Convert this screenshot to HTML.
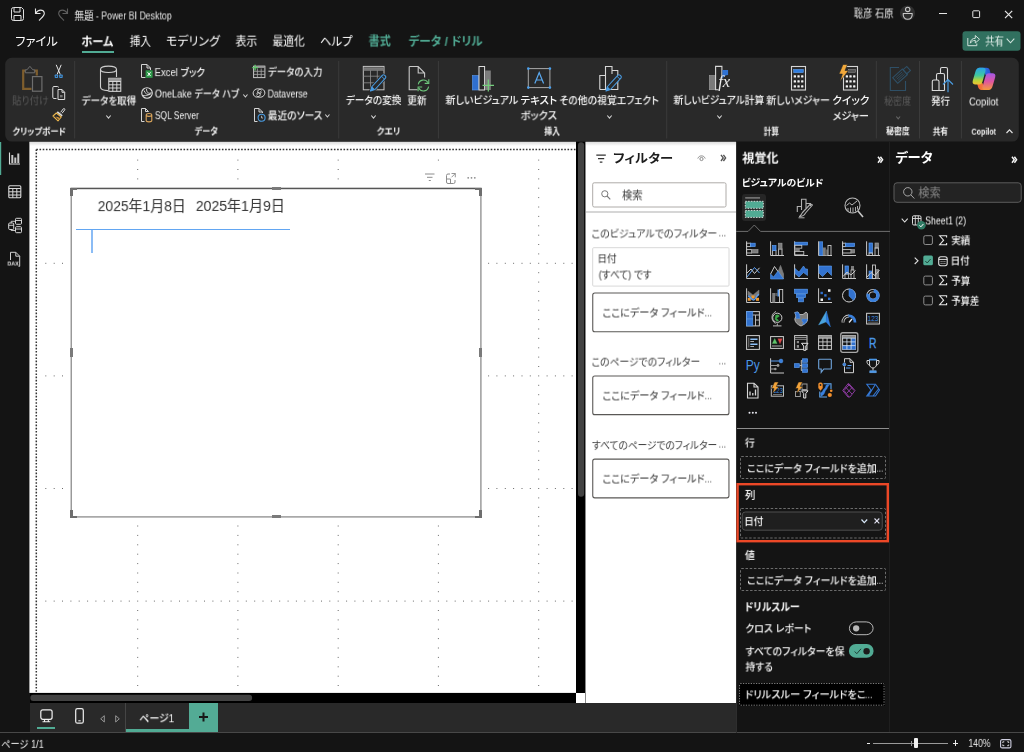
<!DOCTYPE html>
<html lang="ja"><head><meta charset="utf-8"><title>無題 - Power BI Desktop</title>
<style>
html,body{margin:0;padding:0}
html{background:#141414}
body{width:1024px;height:752px;overflow:hidden;position:relative;background:#141414;font-family:'Liberation Sans','Noto Sans CJK JP',sans-serif;color:#fff}
body div,body svg,body span.t{position:absolute;box-sizing:border-box}
span.t{white-space:pre;transform-origin:0 0;display:block;will-change:transform}
svg{overflow:visible}
</style></head>
<body>
<svg style="left:4px;top:56px" width="1016" height="87"><rect x="1.20" y="1.80" width="1013.60" height="83.80" rx="6.5" fill="#292929"/></svg>
<div style="left:0px;top:142px;width:29px;height:561px;background:#141414;"></div>
<svg style="left:0px;top:142px;" width="2" height="33" viewBox="0 0 2 33"><rect x="0" y="0" width="1.200" height="33" fill="#51ab94"/></svg>
<svg style="left:28px;top:140px" width="549" height="554"><rect x="1.40" y="1.80" width="546.60" height="551.10" rx="0" fill="#ffffff"/></svg>
<div style="left:576px;top:142px;width:9px;height:551px;background:#000;"></div>
<svg style="left:576px;top:142px;" width="9" height="356" viewBox="0 0 9 356"><rect x="2" y="0.300" width="6.200" height="354.500" rx="3" fill="#424242"/></svg>
<div style="left:30px;top:693px;width:546px;height:10px;background:#000;"></div>
<svg style="left:30px;top:693px;" width="224" height="10" viewBox="0 0 224 10"><rect x="0.300" y="1.700" width="221.800" height="6.400" rx="3" fill="#424242"/></svg>
<div style="left:576px;top:693px;width:9px;height:10px;background:#fff;"></div>
<svg style="left:584px;top:140px" width="153" height="564"><rect x="1.50" y="1.80" width="150.50" height="561.20" rx="0" fill="#ffffff"/></svg>
<div style="left:736px;top:142px;width:154px;height:591px;background:#141414;"></div>
<svg style="left:888px;top:141px" width="4" height="592"><rect x="1.80" y="1.00" width="1.20" height="590.00" rx="0" fill="#4a4a4a"/></svg>
<div style="left:890px;top:142px;width:134px;height:591px;background:#141414;"></div>
<div style="left:30px;top:703px;width:706px;height:30px;background:#292929;"></div>
<div style="left:0px;top:732px;width:1024px;height:1px;background:#484848;"></div>
<div style="left:0px;top:733px;width:1024px;height:19px;background:#141414;"></div>
<svg style="left:11px;top:7px;" width="13" height="14" viewBox="0 0 13 14"><path d="M0.5 2.5 Q0.5 0.5 2.5 0.5 H10.5 L12.5 2.5 V11.5 Q12.5 13.5 10.5 13.5 H2.5 Q0.5 13.5 0.5 11.5 Z M3 0.5 V5 H9 V0.5 M3 13.5 V8.5 H10 V13.5" fill="none" stroke="#e0e0e0" stroke-width="1"/></svg>
<svg style="left:34px;top:7px;" width="12" height="14" viewBox="0 0 12 14"><path d="M1.5 1.5 V6.5 H6.5 M1.8 6.3 C4 2 9.5 2.2 10.3 6 C10.8 8.5 8 10.5 5 13.5" fill="none" stroke="#e6e6e6" stroke-width="1.1"/></svg>
<svg style="left:57px;top:7px;" width="12" height="14" viewBox="0 0 12 14"><path d="M10.5 1.5 V6.5 H5.5 M10.2 6.3 C8 2 2.5 2.2 1.7 6 C1.2 8.5 4 10.5 7 13.5" fill="none" stroke="#5e5e5e" stroke-width="1.1"/></svg>
<span class="t" style="left:74px;top:8px;color:#e8e8e8;font-size:11px;line-height:15px;font-weight:400;font-feature-settings:'palt';transform:translate(0.57px,0.83px) scaleX(0.8667);">無題</span>
<span class="t" style="left:95px;top:8px;color:#e8e8e8;font-size:11px;line-height:15px;font-weight:400;font-feature-settings:'palt';transform:translate(0.90px,0.39px) scaleX(0.8000);">- Power BI Desktop</span>
<span class="t" style="left:853px;top:6px;color:#e8e8e8;font-size:11px;line-height:15px;font-weight:400;font-feature-settings:'palt';transform:translate(0.79px,0.45px) scaleX(0.8432);">聡彦 石原</span>
<svg style="left:897px;top:3px;" width="20" height="20" viewBox="0 0 20 20"><circle cx="10.500" cy="10" r="7.600" fill="#2e2e2e"/><circle cx="10.700" cy="6.400" r="2.200" fill="none" stroke="#c8c8c8" stroke-width="1.100"/><path d="M6.200 10.500 H15.200 C15.500 14.500 13.500 16.300 10.700 16.300 C7.900 16.300 5.900 14.500 6.200 10.500 Z" fill="none" stroke="#c8c8c8" stroke-width="1.100" stroke-linejoin="round"/></svg>
<div style="left:939px;top:13px;width:8px;height:1px;background:#e6e6e6;"></div>
<svg style="left:972px;top:10px;" width="9" height="9" viewBox="0 0 9 9"><rect x="0.800" y="0.800" width="6.800" height="6.800" rx="0.800" fill="none" stroke="#e6e6e6" stroke-width="1"/></svg>
<svg style="left:1004px;top:10px;" width="10" height="10" viewBox="0 0 10 10"><path d="M1 0.800 L8.200 8.200 M8.200 0.800 L1 8.200" stroke="#e6e6e6" stroke-width="1.200" fill="none"/></svg>
<span class="t" style="left:15px;top:33px;color:#fff;font-size:12px;line-height:16px;font-weight:400;font-feature-settings:'palt';transform:translate(0.23px,0.62px) scaleX(1.0247);">ファイル</span>
<span class="t" style="left:81px;top:34px;color:#fff;font-size:12px;line-height:16px;font-weight:700;font-feature-settings:'palt';transform:translate(0.30px,0.21px) scaleX(0.9323);">ホーム</span>
<span class="t" style="left:129px;top:33px;color:#fff;font-size:12px;line-height:16px;font-weight:400;font-feature-settings:'palt';transform:translate(0.78px,0.85px) scaleX(0.8817);">挿入</span>
<span class="t" style="left:166px;top:33px;color:#fff;font-size:12px;line-height:16px;font-weight:400;font-feature-settings:'palt';transform:translate(0.00px,0.75px) scaleX(0.9953);">モデリング</span>
<span class="t" style="left:235px;top:33px;color:#fff;font-size:12px;line-height:16px;font-weight:400;font-feature-settings:'palt';transform:translate(0.55px,0.68px) scaleX(0.9011);">表示</span>
<span class="t" style="left:272px;top:33px;color:#fff;font-size:12px;line-height:16px;font-weight:400;font-feature-settings:'palt';transform:translate(0.55px,0.60px) scaleX(0.8936);">最適化</span>
<span class="t" style="left:320px;top:33px;color:#fff;font-size:12px;line-height:16px;font-weight:400;font-feature-settings:'palt';transform:translate(0.06px,0.92px) scaleX(0.9403);">ヘルプ</span>
<span class="t" style="left:368px;top:33px;color:#51ab94;font-size:12px;line-height:16px;font-weight:700;font-feature-settings:'palt';transform:translate(0.54px,0.50px) scaleX(0.9247);">書式</span>
<span class="t" style="left:408px;top:33px;color:#51ab94;font-size:12px;line-height:16px;font-weight:700;font-feature-settings:'palt';transform:translate(0.51px,0.82px) scaleX(0.9703);">データ / ドリル</span>
<div style="left:82px;top:51px;width:31.5px;height:2px;background:#51ab94;"></div>
<svg style="left:962px;top:31px;" width="59" height="20" viewBox="0 0 59 20"><rect x="0.500" y="0.200" width="58" height="19.600" rx="3" fill="#31705f"/></svg>
<svg style="left:967px;top:34px;" width="14" height="13" viewBox="0 0 14 13"><path d="M0.800 4 V11.700 H9.800 V9.500" fill="none" stroke="#cfe0da" stroke-width="1"/><path d="M3.300 9.200 C3.300 6 5.500 4.300 8.300 4.300 V1.500 L12.500 5.300 L8.300 9 V6.400 C6 6.400 4.500 7.300 3.300 9.200 Z" fill="none" stroke="#cfe0da" stroke-width="1" stroke-linejoin="round"/></svg>
<span class="t" style="left:985px;top:34px;color:#e3efeb;font-size:11px;line-height:15px;font-weight:400;font-feature-settings:'palt';transform:translate(0.07px,0.49px) scaleX(0.8571);">共有</span>
<svg style="left:1006px;top:38px;" width="9" height="6" viewBox="0 0 9 6"><path d="M0.7 0.7 L4.5 4.8 L8.3 0.7" fill="none" stroke="#cfe3dc" stroke-width="1.1"/></svg>
<svg style="left:73px;top:60px" width="4" height="80"><rect x="1.20" y="1.00" width="1.00" height="77.50" rx="0" fill="#3b3b3b"/></svg>
<svg style="left:337px;top:60px" width="4" height="80"><rect x="1.25" y="1.00" width="1.00" height="77.50" rx="0" fill="#3b3b3b"/></svg>
<svg style="left:436px;top:60px" width="4" height="80"><rect x="1.90" y="1.00" width="1.00" height="77.50" rx="0" fill="#3b3b3b"/></svg>
<svg style="left:665px;top:60px" width="4" height="80"><rect x="1.25" y="1.00" width="1.00" height="77.50" rx="0" fill="#3b3b3b"/></svg>
<svg style="left:874px;top:60px" width="4" height="80"><rect x="1.80" y="1.00" width="1.00" height="77.50" rx="0" fill="#3b3b3b"/></svg>
<svg style="left:918px;top:60px" width="3" height="80"><rect x="1.00" y="1.00" width="1.00" height="77.50" rx="0" fill="#3b3b3b"/></svg>
<svg style="left:959px;top:60px" width="4" height="80"><rect x="1.90" y="1.00" width="1.00" height="77.50" rx="0" fill="#3b3b3b"/></svg>
<svg style="left:21px;top:65px;" width="22" height="28" viewBox="0 0 22 28"><path d="M4.500 5.600 H2.200 V23.800 H10.500 M13.500 5.600 H15.800 V10.500" fill="none" stroke="#7f5e2d" stroke-width="2.200"/><path d="M4.300 7.800 V4.800 H6 L8.900 1.300 L11.800 4.800 H13.700 V7.800 Z" fill="#292929" stroke="#6e6e6e" stroke-width="1"/><rect x="11.500" y="11.600" width="9.400" height="14.600" fill="#292929" stroke="#6e6e6e" stroke-width="1.200"/></svg>
<span class="t" style="left:12px;top:93px;color:#585858;font-size:10.5px;line-height:14.5px;font-weight:400;font-feature-settings:'palt';transform:translate(0.04px,0.35px) scaleX(0.9103);">貼り付け</span>
<svg style="left:54px;top:64px;" width="10" height="15" viewBox="0 0 10 15"><path d="M2.200 0.800 L6.300 10.500 M7.200 0.800 L3.100 10.500" stroke="#e4e4e4" stroke-width="1" fill="none"/><rect x="0.700" y="10.600" width="3.400" height="3.400" rx="0.700" fill="#3f8fd6"/><rect x="5.200" y="10.600" width="3.500" height="3.400" rx="0.700" fill="#3f8fd6"/><rect x="1.800" y="11.700" width="1.200" height="1.200" fill="#292929"/><rect x="6.300" y="11.700" width="1.200" height="1.200" fill="#292929"/></svg>
<svg style="left:52px;top:86px;" width="14" height="15" viewBox="0 0 14 15"><path d="M4.5 12.500 H2 Q0.800 12.500 0.800 11.300 V1.700 Q0.800 0.5 2 0.5 H5.500 Q6.500 0.500 6.500 1.500" fill="none" stroke="#dcdcdc" stroke-width="1"/><path d="M6 3.500 H10 L12.700 6.300 V13.500 H6 Z M10 3.500 V6.300 H12.700" fill="none" stroke="#dcdcdc" stroke-width="1"/><rect x="8" y="9" width="2.6" height="2.400" fill="#777"/></svg>
<svg style="left:52px;top:107px;" width="14" height="15" viewBox="0 0 14 15"><path d="M8.700 5.300 L11.300 1.800 Q12 1.200 12.600 1.800 Q13.100 2.500 12.600 3.100 L10 6.300" fill="none" stroke="#dcdcdc" stroke-width="1"/><path d="M5.800 4.200 L10.700 8.200 L9.600 9.600 L4.700 5.600 Z" fill="#dcdcdc"/><path d="M4.300 6 L9.300 10 L6 13.800 L1 9 Z" fill="#292929" stroke="#e9b44c" stroke-width="1.100" stroke-linejoin="round"/><path d="M3.500 9.500 L6.300 12.300 L7.500 10.800 Z" fill="#e9a03c"/></svg>
<span class="t" style="left:12px;top:125px;color:#f4f4f4;font-size:9px;line-height:13px;font-weight:700;font-feature-settings:'palt';transform:translate(0.53px,0.65px) scaleX(0.9333);">クリップボード</span>
<svg style="left:99px;top:65px;" width="23" height="28" viewBox="0 0 23 28"><path d="M1.500 4.500 C1.500 0 17.500 0 17.500 4.500 V12 M1.500 4.500 C1.500 8.500 17.500 8.500 17.500 4.500 M1.500 4.500 V22 C1.500 24.500 5 25.500 9 25.600" fill="none" stroke="#d0d0d0" stroke-width="1.1"/><rect x="9.8" y="13.3" width="12" height="13" fill="#292929" stroke="#e2e2e2" stroke-width="1"/><rect x="9.8" y="13.300" width="12" height="3" fill="#9a9a9a"/><path d="M9.800 16.500 H21.800 M9.800 19.800 H21.800 M9.800 23 H21.800 M13.800 16.500 V26.300 M17.800 16.500 V26.300" stroke="#e2e2e2" stroke-width="0.9" fill="none"/></svg>
<span class="t" style="left:81px;top:93px;color:#f6f6f6;font-size:10.5px;line-height:14.5px;font-weight:500;font-feature-settings:'palt';transform:translate(0.54px,0.47px) scaleX(0.9114);">データを取得</span>
<svg style="left:106.2px;top:114.5px;" width="5" height="4.2" viewBox="0 0 5 4.2"><path d="M0.3 0.5 L2.5 3.2 L4.7 0.5" fill="none" stroke="#d0d0d0" stroke-width="1.1"/></svg>
<svg style="left:141px;top:64px;" width="12" height="15" viewBox="0 0 12 15"><path d="M0.500 0.500 H6 L9.500 4 V6 M0.500 0.500 V13.500 H4.500 M6 0.500 V4 H9.500" fill="none" stroke="#d4d4d4" stroke-width="1"/><rect x="4.6" y="6.300" width="7" height="7.500" fill="#2e9a4a"/><path d="M6.600 8.300 L9.600 12 M9.600 8.300 L6.600 12" stroke="#fff" stroke-width="1"/></svg>
<span class="t" style="left:154px;top:65px;color:#f6f6f6;font-size:10.5px;line-height:14.5px;font-weight:500;font-feature-settings:'palt';transform:translate(0.57px,0.09px) scaleX(0.9078);">Excel ブック</span>
<svg style="left:141px;top:87px;" width="12" height="12" viewBox="0 0 12 12"><circle cx="6" cy="6" r="5.300" fill="none" stroke="#dedede" stroke-width="1.1"/><path d="M3 3.500 C4 6.500 6 8 9.500 7.500 M5.500 2 C5.500 5 7 7 10.500 6 M2 8.500 C5 9 8 8.500 10 5.500" fill="none" stroke="#dedede" stroke-width="0.9"/></svg>
<span class="t" style="left:154px;top:86px;color:#f6f6f6;font-size:10.5px;line-height:14.5px;font-weight:500;font-feature-settings:'palt';transform:translate(0.82px,0.55px) scaleX(0.8686);">OneLake データ ハブ</span>
<svg style="left:243px;top:93.5px;" width="4.8" height="4" viewBox="0 0 4.8 4"><path d="M0.3 0.5 L2.4 3 L4.5 0.5" fill="none" stroke="#d0d0d0" stroke-width="1.1"/></svg>
<svg style="left:141px;top:108px;" width="12" height="15" viewBox="0 0 12 15"><path d="M0.500 0.500 H4.500 L7.500 3.500 M0.500 0.500 V13.500 H3.500 M4.500 0.500 V3.500 H7.500" fill="none" stroke="#d4d4d4" stroke-width="1"/><path d="M5.200 7 C5.200 5 10.800 5 10.800 7 V12.500 C10.800 14.300 5.200 14.300 5.200 12.500 Z M5.200 7 C5.200 8.800 10.800 8.800 10.800 7" fill="none" stroke="#d9a45b" stroke-width="1.1"/></svg>
<span class="t" style="left:154px;top:108px;color:#f6f6f6;font-size:10.5px;line-height:14.5px;font-weight:500;font-feature-settings:'palt';transform:translate(0.85px,0.14px) scaleX(0.8065);">SQL Server</span>
<span class="t" style="left:194px;top:125px;color:#f4f4f4;font-size:9px;line-height:13px;font-weight:700;font-feature-settings:'palt';transform:translate(0.67px,0.54px) scaleX(0.9091);">データ</span>
<svg style="left:252px;top:64px;" width="14" height="15" viewBox="0 0 14 15"><rect x="1.600" y="2.200" width="11.300" height="11.400" fill="none" stroke="#c8c8c8" stroke-width="1"/><path d="M5.500 2.200 H12.900 M5.500 3.500 H12.900" stroke="#9a9a9a" stroke-width="0.900"/><path d="M1.600 7.300 H12.900 M1.600 10.400 H12.900 M5.400 4.500 V13.600 M9.200 4.500 V13.600" stroke="#a8a8a8" stroke-width="0.800" fill="none"/><path d="M0.300 3.600 H6 M3.100 0.700 V6.500" stroke="#62c56c" stroke-width="1.300" fill="none"/></svg>
<span class="t" style="left:267px;top:64px;color:#f6f6f6;font-size:10.5px;line-height:14.5px;font-weight:500;font-feature-settings:'palt';transform:translate(0.80px,0.63px) scaleX(0.9042);">データの入力</span>
<svg style="left:252px;top:87px;" width="14" height="12" viewBox="0 0 14 12"><path d="M9.500 3.300 C7.500 1 3 1.200 1.500 4.500 C0 8 3.500 11.500 7 9.500 C9 8.300 8.500 5.500 6.500 5.500 C5 5.500 4.500 7 5.500 7.800" fill="none" stroke="#dcdcdc" stroke-width="1"/><path d="M4.500 8.700 C6.500 11 11 10.800 12.500 7.500 C14 4 10.500 0.500 7 2.500 C5 3.700 5.500 6.500 7.500 6.500 C9 6.500 9.500 5 8.500 4.200" fill="none" stroke="#dcdcdc" stroke-width="1"/></svg>
<span class="t" style="left:267px;top:86px;color:#f6f6f6;font-size:10.5px;line-height:14.5px;font-weight:500;font-feature-settings:'palt';transform:translate(0.62px,0.55px) scaleX(0.8342);">Dataverse</span>
<svg style="left:254px;top:108px;" width="12" height="15" viewBox="0 0 12 15"><path d="M0.500 0.500 H5 L8.500 4 V5 M0.500 0.500 V13.500 H3.500 M5 0.500 V4 H8.500" fill="none" stroke="#d4d4d4" stroke-width="1"/><circle cx="7.600" cy="9.800" r="3.500" fill="none" stroke="#4a9be0" stroke-width="1.100"/><path d="M7.600 7.800 V10 H9" stroke="#bbb" stroke-width="0.9" fill="none"/></svg>
<span class="t" style="left:267px;top:108px;color:#f6f6f6;font-size:10.5px;line-height:14.5px;font-weight:500;font-feature-settings:'palt';transform:translate(0.79px,0.32px) scaleX(0.9267);">最近のソース</span>
<svg style="left:325.4px;top:113.8px;" width="4.8" height="4" viewBox="0 0 4.8 4"><path d="M0.3 0.5 L2.4 3 L4.5 0.5" fill="none" stroke="#d0d0d0" stroke-width="1.1"/></svg>
<svg style="left:362px;top:65px;" width="26" height="28" viewBox="0 0 26 28"><rect x="1.300" y="1.400" width="20.700" height="23.400" fill="none" stroke="#c4c4c4" stroke-width="1"/><rect x="1.800" y="2.300" width="19.700" height="2.600" fill="#7a7a7a"/><path d="M1.300 5.300 H22 M1.300 11.200 H22 M1.300 17.800 H22 M8.500 5.300 V24.800 M15.300 5.300 V24.800" stroke="#909090" stroke-width="0.800" fill="none"/><g transform="translate(8,9)"><path d="M0.500 17 L2 12.500 L12.500 1.200 Q13.500 0.300 14.500 1.200 L15.500 2.200 Q16.300 3.200 15.400 4.200 L5 15.500 Z" fill="#292929" stroke="#292929" stroke-width="2.500"/><path d="M0.500 17 L2 12.500 L12.500 1.200 Q13.500 0.300 14.500 1.200 L15.500 2.200 Q16.300 3.200 15.400 4.200 L5 15.500 Z" fill="none" stroke="#4a9be0" stroke-width="1.1" stroke-linejoin="round"/><path d="M0.500 17 L2 12.500 L5 15.500 Z" fill="#4a9be0"/><path d="M11.500 2.300 L14.500 5.200" stroke="#4a9be0" stroke-width="0.9"/></g></svg>
<span class="t" style="left:345px;top:93px;color:#f6f6f6;font-size:10.5px;line-height:14.5px;font-weight:500;font-feature-settings:'palt';transform:translate(0.79px,0.02px) scaleX(0.9185);">データの変換</span>
<svg style="left:370.9px;top:114.5px;" width="5" height="4.2" viewBox="0 0 5 4.2"><path d="M0.3 0.5 L2.5 3.2 L4.7 0.5" fill="none" stroke="#d0d0d0" stroke-width="1.1"/></svg>
<svg style="left:408px;top:65px;" width="22" height="28" viewBox="0 0 22 28"><path d="M1.200 1.500 H10.200 L16.600 8 V12.500 M1.200 1.500 V24.700 H9.500 M10.200 1.500 V8 H16.600" fill="none" stroke="#c8c8c8" stroke-width="1.100"/><path d="M10.300 19.300 A5.200 5.200 0 0 1 20 17.800 M20.600 21.600 A5.200 5.200 0 0 1 10.800 23" fill="none" stroke="#6cc47a" stroke-width="1.100"/><path d="M20.800 14.300 V18.400 H16.700 M10.100 26.200 V22 H14.200" fill="none" stroke="#6cc47a" stroke-width="1.100"/></svg>
<span class="t" style="left:407px;top:93px;color:#f6f6f6;font-size:10.5px;line-height:14.5px;font-weight:500;font-feature-settings:'palt';transform:translate(0.29px,0.37px) scaleX(0.9136);">更新</span>
<span class="t" style="left:376px;top:125px;color:#f4f4f4;font-size:9px;line-height:13px;font-weight:700;font-feature-settings:'palt';transform:translate(0.62px,0.48px) scaleX(0.9630);">クエリ</span>
<svg style="left:471px;top:65px;" width="24" height="28" viewBox="0 0 24 28"><rect x="1.300" y="10.400" width="6.300" height="14.600" fill="#2f6fcf" stroke="#5a97e6" stroke-width="0.6"/><rect x="8" y="1.500" width="5.600" height="23.500" fill="none" stroke="#dcdcdc" stroke-width="1"/><rect x="14.100" y="5.500" width="5.700" height="19.500" fill="#7d7d7d"/><path d="M11.500 20.400 H23 M17.300 14.500 V26.500" stroke="#74cf7c" stroke-width="1.200" fill="none"/></svg>
<span class="t" style="left:445px;top:92px;color:#f6f6f6;font-size:10.5px;line-height:14.5px;font-weight:500;font-feature-settings:'palt';transform:translate(0.51px,0.89px) scaleX(0.9493);">新しいビジュアル</span>
<svg style="left:526px;top:66px;" width="26" height="24" viewBox="0 0 26 24"><rect x="2.300" y="2.600" width="21.600" height="19" fill="none" stroke="#a8a8a8" stroke-width="1"/><rect x="1" y="1.300" width="2.600" height="2.600" rx="1.300" fill="#4aa0ee"/><rect x="22.600" y="1.300" width="2.600" height="2.600" rx="1.300" fill="#4aa0ee"/><rect x="1" y="20.300" width="2.600" height="2.600" rx="1.300" fill="#4aa0ee"/><rect x="22.600" y="20.300" width="2.600" height="2.600" rx="1.300" fill="#4aa0ee"/><path d="M8.800 17.500 L13.200 6.500 L17.600 17.500 M10.300 14 H16" fill="none" stroke="#5aa9f0" stroke-width="1.200"/></svg>
<span class="t" style="left:520px;top:92px;color:#f6f6f6;font-size:10.5px;line-height:14.5px;font-weight:500;font-feature-settings:'palt';transform:translate(0.50px,0.78px) scaleX(1.0028);">テキスト</span>
<span class="t" style="left:520px;top:108px;color:#f6f6f6;font-size:10.5px;line-height:14.5px;font-weight:500;font-feature-settings:'palt';transform:translate(0.51px,0.21px) scaleX(0.9889);">ボックス</span>
<svg style="left:598px;top:65px;" width="26" height="28" viewBox="0 0 26 28"><path d="M1.800 24.500 V10.500 H7.500 M7.500 24.500 V1.500 H14 V9 M14 5.500 H19.800 V24.500 H1.800" fill="none" stroke="#d6d6d6" stroke-width="1.100"/><g transform="translate(7.500,9)"><path d="M0.500 17 L2 12.500 L12.500 1.200 Q13.500 0.300 14.500 1.200 L15.500 2.200 Q16.300 3.200 15.400 4.200 L5 15.500 Z" fill="#292929"/><path d="M0.500 17 L2 12.500 L12.500 1.200 Q13.500 0.300 14.500 1.200 L15.500 2.200 Q16.300 3.200 15.400 4.200 L5 15.500 Z" fill="none" stroke="#4a9be0" stroke-width="1.1" stroke-linejoin="round"/><path d="M0.500 17 L2 12.500 L5 15.500 Z" fill="#4a9be0"/><path d="M11.500 2.300 L14.500 5.200" stroke="#4a9be0" stroke-width="0.9"/></g></svg>
<span class="t" style="left:559px;top:93px;color:#f6f6f6;font-size:10.5px;line-height:14.5px;font-weight:500;font-feature-settings:'palt';transform:translate(0.40px,0.09px) scaleX(0.9370);">その他の視覚エフェクト</span>
<svg style="left:606.7px;top:114.5px;" width="5" height="4.2" viewBox="0 0 5 4.2"><path d="M0.3 0.5 L2.5 3.2 L4.7 0.5" fill="none" stroke="#d0d0d0" stroke-width="1.1"/></svg>
<span class="t" style="left:544px;top:125px;color:#f4f4f4;font-size:9px;line-height:13px;font-weight:700;font-feature-settings:'palt';transform:translate(0.28px,0.63px) scaleX(0.8714);">挿入</span>
<svg style="left:708px;top:65px;" width="24" height="28" viewBox="0 0 24 28"><rect x="1.300" y="10.500" width="6.200" height="14.200" fill="#7a7a7a" stroke="#a0a0a0" stroke-width="0.600"/><path d="M13.900 13.500 V1.400 H7.600 V24.800 H10.500" fill="none" stroke="#d8d8d8" stroke-width="1.100"/><path d="M14.400 5 H20.100 V10 C17.500 10 15.500 11.500 14.400 13.800 Z" fill="#2f72d4"/></svg>
<span class="t" style="left:718px;top:72px;color:#ececec;font-size:16px;line-height:20px;font-weight:400;font-feature-settings:'palt';font-family:'Liberation Serif',serif;font-style:italic;transform:translate(0.14px,0.03px) scaleX(1.0311);">fx</span>
<span class="t" style="left:673px;top:92px;color:#f6f6f6;font-size:10.5px;line-height:14.5px;font-weight:500;font-feature-settings:'palt';transform:translate(0.52px,0.85px) scaleX(0.9304);">新しいビジュアル計算</span>
<svg style="left:716.5px;top:114.5px;" width="5" height="4.2" viewBox="0 0 5 4.2"><path d="M0.3 0.5 L2.5 3.2 L4.7 0.5" fill="none" stroke="#d0d0d0" stroke-width="1.1"/></svg>
<svg style="left:791px;top:66px;" width="15" height="25" viewBox="0 0 15 25"><rect x="0.500" y="0.500" width="14" height="23.500" fill="none" stroke="#d6d6d6" stroke-width="1.100"/><rect x="2.600" y="3.300" width="9.800" height="3.400" fill="#2f7de0" stroke="#6aa6ee" stroke-width="0.5"/><rect x="2.7" y="9.3" width="2.300" height="2.300" rx="0.5" fill="#f2f2f2"/><rect x="6.4" y="9.3" width="2.300" height="2.300" rx="0.5" fill="#f2f2f2"/><rect x="10.1" y="9.3" width="2.300" height="2.300" rx="0.5" fill="#f2f2f2"/><rect x="2.7" y="14.3" width="2.300" height="2.300" rx="0.5" fill="#f2f2f2"/><rect x="6.4" y="14.3" width="2.300" height="2.300" rx="0.5" fill="#f2f2f2"/><rect x="10.1" y="14.3" width="2.300" height="2.300" rx="0.5" fill="#f2f2f2"/><rect x="2.7" y="19.3" width="2.300" height="2.300" rx="0.5" fill="#f2f2f2"/><rect x="6.4" y="19.3" width="2.300" height="2.300" rx="0.5" fill="#f2f2f2"/><rect x="10.1" y="19.3" width="2.300" height="2.300" rx="0.5" fill="#f2f2f2"/></svg>
<span class="t" style="left:766px;top:93px;color:#f6f6f6;font-size:10.5px;line-height:14.5px;font-weight:500;font-feature-settings:'palt';transform:translate(0.26px,0.23px) scaleX(0.9470);">新しいメジャー</span>
<svg style="left:843px;top:66px;" width="15" height="25" viewBox="0 0 15 25"><rect x="0.500" y="0.500" width="14" height="23.500" fill="none" stroke="#d6d6d6" stroke-width="1.100"/><rect x="5.500" y="3.300" width="7" height="3" fill="#555" stroke="#999" stroke-width="0.5"/><rect x="2.7" y="9.3" width="2.300" height="2.300" rx="0.5" fill="#f2f2f2"/><rect x="6.4" y="9.3" width="2.300" height="2.300" rx="0.5" fill="#f2f2f2"/><rect x="10.1" y="9.3" width="2.300" height="2.300" rx="0.5" fill="#f2f2f2"/><rect x="2.7" y="14.3" width="2.300" height="2.300" rx="0.5" fill="#f2f2f2"/><rect x="6.4" y="14.3" width="2.300" height="2.300" rx="0.5" fill="#f2f2f2"/><rect x="10.1" y="14.3" width="2.300" height="2.300" rx="0.5" fill="#f2f2f2"/><rect x="2.7" y="19.3" width="2.300" height="2.300" rx="0.5" fill="#f2f2f2"/><rect x="6.4" y="19.3" width="2.300" height="2.300" rx="0.5" fill="#f2f2f2"/><rect x="10.1" y="19.3" width="2.300" height="2.300" rx="0.5" fill="#f2f2f2"/></svg>
<svg style="left:838px;top:64px;" width="12" height="18" viewBox="0 0 12 18"><path d="M5 0.500 H9.500 L7 6.500 H10.500 L2 17.500 L4.300 10 H1 Z" fill="#f2a93b" stroke="#292929" stroke-width="0.6"/></svg>
<span class="t" style="left:832px;top:93px;color:#f6f6f6;font-size:10.5px;line-height:14.5px;font-weight:500;font-feature-settings:'palt';transform:translate(0.23px,0.44px) scaleX(1.0214);">クイック</span>
<span class="t" style="left:832px;top:108px;color:#f6f6f6;font-size:10.5px;line-height:14.5px;font-weight:500;font-feature-settings:'palt';transform:translate(0.52px,0.90px) scaleX(0.9589);">メジャー</span>
<span class="t" style="left:763px;top:125px;color:#f4f4f4;font-size:9px;line-height:13px;font-weight:700;font-feature-settings:'palt';transform:translate(0.79px,0.67px) scaleX(0.8429);">計算</span>
<svg style="left:889px;top:65px;" width="22" height="27" viewBox="0 0 22 27"><path d="M10 2.500 H1.300 V25.500 H16.500 V16" fill="none" stroke="#2e4f66" stroke-width="1.100"/><g transform="rotate(-42 12 10)"><rect x="4" y="6.500" width="13" height="7.500" fill="none" stroke="#2e4f66" stroke-width="1.100"/><rect x="17" y="7.500" width="5" height="5.500" fill="none" stroke="#2e4f66" stroke-width="1.100"/><path d="M6 8.500 H15 M6 10.300 H15 M6 12 H15" stroke="#2e4f66" stroke-width="0.8"/></g></svg>
<span class="t" style="left:884px;top:93px;color:#5a5a5a;font-size:10.5px;line-height:14.5px;font-weight:400;font-feature-settings:'palt';transform:translate(0.03px,0.66px) scaleX(0.8618);">秘密度</span>
<svg style="left:895.5px;top:115.6px;" width="4.4" height="3.9" viewBox="0 0 4.4 3.9"><path d="M0.3 0.5 L2.2 2.9 L4.1000000000000005 0.5" fill="none" stroke="#666" stroke-width="1.1"/></svg>
<span class="t" style="left:886px;top:125px;color:#f4f4f4;font-size:9px;line-height:13px;font-weight:700;font-feature-settings:'palt';transform:translate(0.18px,0.22px) scaleX(0.8648);">秘密度</span>
<svg style="left:931px;top:66px;" width="23" height="27" viewBox="0 0 23 27"><path d="M5.500 14 V9 Q5.500 7.500 7 7.500 H9.500 V3 Q9.500 1.500 11 1.500 H15 Q16.500 1.500 16.500 3 V14.500 M9.500 7.500 H12 Q13.500 7.500 13.500 9 V24.500 M1.300 24.500 V15.500 Q1.300 14 2.800 14 H6.500 Q8 14 8 15.500 V24.500 Z M8 24.500 H13.500" fill="none" stroke="#dadada" stroke-width="1.100"/><path d="M17 26.300 V13.500 M12 18.500 L17 13.500 L22 18.500" fill="none" stroke="#4a9be0" stroke-width="1.200"/></svg>
<span class="t" style="left:931px;top:93px;color:#f6f6f6;font-size:10.5px;line-height:14.5px;font-weight:500;font-feature-settings:'palt';transform:translate(0.18px,0.71px) scaleX(0.8938);">発行</span>
<span class="t" style="left:932px;top:125px;color:#f4f4f4;font-size:9px;line-height:13px;font-weight:700;font-feature-settings:'palt';transform:translate(0.79px,0.64px) scaleX(0.8464);">共有</span>
<svg style="left:972px;top:67px;" width="24" height="24" viewBox="0 0 24 24"><defs>
<linearGradient id="cpa" x1="0" y1="0" x2="0" y2="1"><stop offset="0" stop-color="#2aa3e8"/><stop offset="0.45" stop-color="#3fc7a0"/><stop offset="0.75" stop-color="#b7d43a"/><stop offset="1" stop-color="#f2c233"/></linearGradient>
<linearGradient id="cpb" x1="0" y1="0" x2="0" y2="1"><stop offset="0" stop-color="#a259e6"/><stop offset="0.5" stop-color="#e0569f"/><stop offset="1" stop-color="#f59a3c"/></linearGradient>
<linearGradient id="cpc" x1="0" y1="0" x2="1" y2="0"><stop offset="0" stop-color="#2f8fe8"/><stop offset="1" stop-color="#2b4fd8"/></linearGradient>
<linearGradient id="cpd" x1="0" y1="0" x2="1" y2="0"><stop offset="0" stop-color="#f0603a"/><stop offset="1" stop-color="#f59a3c"/></linearGradient></defs>
<path d="M7 0.800 H14.500 C16.500 0.800 17.500 2 18 4 L19 8 H13.500 L12.500 4.500 Z" fill="url(#cpc)"/>
<path d="M17 23 H9.500 C7.500 23 6.500 21.800 6 19.800 L5 16 H10.500 L11.500 19.500 Z" fill="url(#cpd)"/>
<path d="M7.500 0.800 C5 0.800 4 2.500 3.300 5 L0.800 13.500 C0 16 1.300 17.500 3.500 17.500 H7 C9 17.500 10 16.300 10.500 14.500 L13.500 4 C14 2 13 0.800 11 0.800 Z" fill="url(#cpa)"/>
<path d="M16.500 23 C19 23 20 21.300 20.700 18.800 L23.200 10.300 C24 7.800 22.700 6.300 20.500 6.300 H17 C15 6.300 14 7.500 13.500 9.300 L10.500 19.800 C10 21.800 11 23 13 23 Z" fill="url(#cpb)"/></svg>
<span class="t" style="left:969px;top:94px;color:#f6f6f6;font-size:10.5px;line-height:14.5px;font-weight:500;font-feature-settings:'palt';transform:translate(0.05px,0.46px) scaleX(0.8915);">Copilot</span>
<span class="t" style="left:971px;top:125px;color:#f4f4f4;font-size:9px;line-height:13px;font-weight:700;font-feature-settings:'palt';transform:translate(0.55px,0.68px) scaleX(0.7886);">Copilot</span>
<svg style="left:1005.5px;top:129px;" width="7" height="5" viewBox="0 0 7 5"><path d="M0.500 4 L3.500 0.800 L6.500 4" fill="none" stroke="#e0e0e0" stroke-width="1.200"/></svg>
<svg style="left:8px;top:151px;" width="13" height="15" viewBox="0 0 13 15"><path d="M1.500 1.500 V13 H12" fill="none" stroke="#ddd" stroke-width="1.100"/><rect x="3.300" y="4" width="2" height="8" fill="#c8c8c8"/><rect x="6.300" y="6.500" width="2" height="5.500" fill="#c8c8c8"/><rect x="9.300" y="2.500" width="2" height="9.500" fill="#c8c8c8"/></svg>
<svg style="left:8px;top:185px;" width="14" height="14" viewBox="0 0 14 14"><rect x="0.800" y="0.800" width="12" height="12" rx="1" fill="none" stroke="#d8d8d8" stroke-width="1.100"/><path d="M0.800 3.500 H12.800 M0.800 6.800 H12.800 M0.800 10 H12.800 M4.800 3.500 V12.800 M8.800 3.500 V12.800" stroke="#d8d8d8" stroke-width="1" fill="none"/></svg>
<svg style="left:8px;top:217px;" width="15" height="17" viewBox="0 0 15 17"><rect x="0.700" y="6" width="5" height="6.500" rx="1" fill="none" stroke="#d8d8d8" stroke-width="1"/><rect x="7.500" y="1.300" width="6" height="6" rx="1" fill="none" stroke="#d8d8d8" stroke-width="1"/><rect x="7.500" y="9.700" width="6" height="6" rx="1" fill="none" stroke="#d8d8d8" stroke-width="1"/><path d="M0.700 8.300 H5.700 M7.500 3.500 H13.500 M7.500 12 H13.500 M3.200 6 V4.300 H7.500 M3.200 12.500 V13.500 H7.500" stroke="#d8d8d8" stroke-width="0.900" fill="none"/></svg>
<svg style="left:8px;top:251px;" width="14" height="17" viewBox="0 0 14 17"><path d="M2.500 9 V1.300 H7.800 L11.700 5.200 V15.300 H10.500 M7.800 1.300 V5.200 H11.700" fill="none" stroke="#d0d0d0" stroke-width="1"/></svg>
<span class="t" style="left:7px;top:258px;color:#e8e8e8;font-size:6px;line-height:10px;font-weight:700;font-feature-settings:'palt';transform:translate(0.58px,0.52px) scaleX(0.8735);">DAX</span>
<div style="left:30px;top:142px;width:546px;height:4px;background:linear-gradient(#dcdcdc,#fff);"></div>
<svg style="left:30px;top:142px;" width="546" height="551" viewBox="0 0 546 551"><path d="M6.300 7.400 H546" stroke="#333" stroke-width="1.500" stroke-dasharray="1.600 1.600" fill="none"/><path d="M6.300 7.400 V551" stroke="#333" stroke-width="1.500" stroke-dasharray="1.600 1.600" fill="none"/></svg>
<svg style="left:30px;top:142px;" width="546" height="551" viewBox="0 0 546 551"><path d="M15.8 121.3h0M15.8 233.9h0M15.8 346.5h0M15.8 459.1h0M24.2 121.3h0M24.2 233.9h0M24.2 346.5h0M24.2 459.1h0M32.5 121.3h0M32.5 233.9h0M32.5 346.5h0M32.5 459.1h0M40.9 459.1h0M49.2 459.1h0M57.6 459.1h0M65.9 459.1h0M74.3 459.1h0M82.6 459.1h0M91.0 459.1h0M99.3 459.1h0M107.7 18.1h0M107.7 27.5h0M107.7 36.9h0M107.7 384.0h0M107.7 393.4h0M107.7 402.8h0M107.7 412.2h0M107.7 421.6h0M107.7 431.0h0M107.7 440.3h0M107.7 449.7h0M107.7 459.1h0M107.7 468.5h0M107.7 477.9h0M107.7 487.2h0M107.7 496.6h0M107.7 506.0h0M107.7 515.4h0M107.7 524.8h0M107.7 534.2h0M107.7 543.5h0M116.1 459.1h0M124.4 459.1h0M132.8 459.1h0M141.1 459.1h0M149.5 459.1h0M157.8 459.1h0M166.2 459.1h0M174.5 459.1h0M182.9 459.1h0M191.2 459.1h0M199.6 459.1h0M207.9 18.1h0M207.9 27.5h0M207.9 36.9h0M207.9 384.0h0M207.9 393.4h0M207.9 402.8h0M207.9 412.2h0M207.9 421.6h0M207.9 431.0h0M207.9 440.3h0M207.9 449.7h0M207.9 459.1h0M207.9 468.5h0M207.9 477.9h0M207.9 487.2h0M207.9 496.6h0M207.9 506.0h0M207.9 515.4h0M207.9 524.8h0M207.9 534.2h0M207.9 543.5h0M216.3 459.1h0M224.7 459.1h0M233.0 459.1h0M241.4 459.1h0M249.7 459.1h0M258.1 459.1h0M266.4 459.1h0M274.8 459.1h0M283.1 459.1h0M291.5 459.1h0M299.8 459.1h0M308.2 18.1h0M308.2 27.5h0M308.2 36.9h0M308.2 384.0h0M308.2 393.4h0M308.2 402.8h0M308.2 412.2h0M308.2 421.6h0M308.2 431.0h0M308.2 440.3h0M308.2 449.7h0M308.2 459.1h0M308.2 468.5h0M308.2 477.9h0M308.2 487.2h0M308.2 496.6h0M308.2 506.0h0M308.2 515.4h0M308.2 524.8h0M308.2 534.2h0M308.2 543.5h0M316.6 459.1h0M324.9 459.1h0M333.3 459.1h0M341.6 459.1h0M350.0 459.1h0M358.3 459.1h0M366.7 459.1h0M375.0 459.1h0M383.4 459.1h0M391.7 459.1h0M400.1 459.1h0M408.4 18.1h0M408.4 384.0h0M408.4 393.4h0M408.4 402.8h0M408.4 412.2h0M408.4 421.6h0M408.4 431.0h0M408.4 440.3h0M408.4 449.7h0M408.4 459.1h0M408.4 468.5h0M408.4 477.9h0M408.4 487.2h0M408.4 496.6h0M408.4 506.0h0M408.4 515.4h0M408.4 524.8h0M408.4 534.2h0M408.4 543.5h0M416.8 459.1h0M425.2 459.1h0M433.5 459.1h0M441.9 459.1h0M450.2 459.1h0M458.6 121.3h0M458.6 233.9h0M458.6 346.5h0M458.6 459.1h0M466.9 121.3h0M466.9 233.9h0M466.9 346.5h0M466.9 459.1h0M475.3 121.3h0M475.3 233.9h0M475.3 346.5h0M475.3 459.1h0M483.6 121.3h0M483.6 233.9h0M483.6 346.5h0M483.6 459.1h0M492.0 121.3h0M492.0 233.9h0M492.0 346.5h0M492.0 459.1h0M500.3 121.3h0M500.3 233.9h0M500.3 346.5h0M500.3 459.1h0M508.7 18.1h0M508.7 27.5h0M508.7 36.9h0M508.7 46.2h0M508.7 55.6h0M508.7 65.0h0M508.7 74.4h0M508.7 83.8h0M508.7 93.2h0M508.7 102.5h0M508.7 111.9h0M508.7 121.3h0M508.7 130.7h0M508.7 140.1h0M508.7 149.4h0M508.7 158.8h0M508.7 168.2h0M508.7 177.6h0M508.7 187.0h0M508.7 196.4h0M508.7 205.8h0M508.7 215.1h0M508.7 224.5h0M508.7 233.9h0M508.7 243.3h0M508.7 252.7h0M508.7 262.1h0M508.7 271.4h0M508.7 280.8h0M508.7 290.2h0M508.7 299.6h0M508.7 309.0h0M508.7 318.4h0M508.7 327.7h0M508.7 337.1h0M508.7 346.5h0M508.7 355.9h0M508.7 365.3h0M508.7 374.6h0M508.7 384.0h0M508.7 393.4h0M508.7 402.8h0M508.7 412.2h0M508.7 421.6h0M508.7 431.0h0M508.7 440.3h0M508.7 449.7h0M508.7 459.1h0M508.7 468.5h0M508.7 477.9h0M508.7 487.2h0M508.7 496.6h0M508.7 506.0h0M508.7 515.4h0M508.7 524.8h0M508.7 534.2h0M508.7 543.5h0M517.1 121.3h0M517.1 233.9h0M517.1 346.5h0M517.1 459.1h0M525.4 121.3h0M525.4 233.9h0M525.4 346.5h0M525.4 459.1h0M533.8 121.3h0M533.8 233.9h0M533.8 346.5h0M533.8 459.1h0M542.1 121.3h0M542.1 233.9h0M542.1 346.5h0M542.1 459.1h0" stroke="#6a6a6a" stroke-width="1" stroke-linecap="square" fill="none"/></svg>
<svg style="left:69px;top:186px" width="414" height="333"><rect x="2.25" y="2.50" width="409.65" height="328.40" rx="0" fill="#fff" stroke="#949494" stroke-width="1.4"/></svg>
<svg style="left:69px;top:186px" width="414" height="5"><rect x="1.55" y="1.80" width="411.05" height="1.30" rx="0" fill="#565656"/></svg>
<div style="left:70.2px;top:187.5px;width:6.8px;height:2.5px;background:#6e6e6e;"></div>
<div style="left:70.2px;top:187.5px;width:2.5px;height:8px;background:#6e6e6e;"></div>
<div style="left:474.8px;top:187.5px;width:7px;height:2.5px;background:#6e6e6e;"></div>
<div style="left:479.4px;top:187.5px;width:2.5px;height:8px;background:#6e6e6e;"></div>
<div style="left:70.2px;top:515.5px;width:6.8px;height:2.5px;background:#6e6e6e;"></div>
<div style="left:70.2px;top:510px;width:2.5px;height:8px;background:#6e6e6e;"></div>
<div style="left:474.8px;top:515.5px;width:7px;height:2.5px;background:#6e6e6e;"></div>
<div style="left:479.4px;top:510px;width:2.5px;height:8px;background:#6e6e6e;"></div>
<div style="left:271.9px;top:187.3px;width:9.1px;height:3px;background:#7a7a7a;"></div>
<div style="left:271.9px;top:515.3px;width:9.1px;height:3px;background:#7a7a7a;"></div>
<div style="left:70px;top:348px;width:2.8px;height:9px;background:#7a7a7a;"></div>
<div style="left:479.4px;top:348px;width:2.8px;height:9px;background:#7a7a7a;"></div>
<svg style="left:425px;top:173px;" width="10" height="9" viewBox="0 0 10 9"><path d="M0 1 H9.500 M2 4.300 H7.500 M3.800 7.500 H5.800" stroke="#8c8c8c" stroke-width="1" fill="none"/></svg>
<svg style="left:446px;top:173px;" width="10" height="11" viewBox="0 0 10 11"><path d="M4 1 H2 Q0.500 1 0.500 2.500 V9 Q0.500 10.500 2 10.500 H7.500 Q9 10.500 9 9 V7 M0.500 6 H4.500 V10.500" fill="none" stroke="#8c8c8c" stroke-width="1"/><path d="M5.500 0.500 H9.300 V4.300 M9.300 0.500 L5.500 4.300" fill="none" stroke="#8c8c8c" stroke-width="0.900"/></svg>
<svg style="left:467px;top:176px;" width="9" height="4" viewBox="0 0 9 4"><circle cx="1.200" cy="1.800" r="0.900" fill="#8c8c8c"/><circle cx="4.500" cy="1.800" r="0.900" fill="#8c8c8c"/><circle cx="7.800" cy="1.800" r="0.900" fill="#8c8c8c"/></svg>
<span class="t" style="left:97px;top:196px;color:#303030;font-size:15px;line-height:19px;font-weight:400;font-feature-settings:'palt';transform:translate(0.71px,0.08px) scaleX(0.9264);">2025年1月8日</span>
<span class="t" style="left:195px;top:195px;color:#303030;font-size:15px;line-height:19px;font-weight:400;font-feature-settings:'palt';transform:translate(0.80px,0.92px) scaleX(0.9373);">2025年1月9日</span>
<div style="left:76px;top:229px;width:214px;height:1.1px;background:#62a6f2;"></div>
<div style="left:91.4px;top:229.5px;width:1.5px;height:23.2px;background:#8bbcf5;"></div>
<div style="left:585.5px;top:142px;width:150.5px;height:4px;background:linear-gradient(#dedede,#fff);"></div>
<svg style="left:596px;top:153.5px;" width="11" height="10" viewBox="0 0 11 10"><path d="M0.300 1.200 H9.800 M2 4.700 H8.200 M3.800 8.200 H6.400" stroke="#333" stroke-width="1.200" fill="none"/></svg>
<span class="t" style="left:612px;top:150px;color:#1c1c1c;font-size:12.5px;line-height:16.5px;font-weight:700;font-feature-settings:'palt';transform:translate(0.95px,0.54px) scaleX(1.0621);">フィルター</span>
<svg style="left:697px;top:154px;" width="9" height="8" viewBox="0 0 9 8"><path d="M0.800 4.500 C2 1 7 1 8.200 4.500" fill="none" stroke="#8a8a8a" stroke-width="1"/><circle cx="4.500" cy="5" r="1.600" fill="none" stroke="#8a8a8a" stroke-width="1"/></svg>
<svg style="left:720px;top:154px;" width="7" height="8" viewBox="0 0 7 8"><path d="M1 0.800 L3.200 3.900 L1 7 M3.400 0.800 L5.600 3.900 L3.400 7" fill="none" stroke="#555" stroke-width="1.400"/></svg>
<svg style="left:591px;top:181px" width="137" height="28"><rect x="1.70" y="1.80" width="133.30" height="24.20" rx="1.5" fill="#fff" stroke="#aeaba8" stroke-width="1"/></svg>
<svg style="left:601px;top:189.5px;" width="10" height="10" viewBox="0 0 10 10"><circle cx="3.800" cy="3.800" r="3.100" fill="none" stroke="#7a7a7a" stroke-width="1"/><path d="M6 6 L9.300 9.300" stroke="#7a7a7a" stroke-width="1.100"/></svg>
<span class="t" style="left:622px;top:188px;color:#3c3c3c;font-size:11px;line-height:15px;font-weight:400;font-feature-settings:'palt';transform:translate(0.02px,0.39px) scaleX(0.9357);">検索</span>
<div style="left:585.5px;top:211.3px;width:150.5px;height:1.5px;background:#d6d6d6;"></div>
<span class="t" style="left:591px;top:227px;color:#3a3a3a;font-size:10.3px;line-height:14.3px;font-weight:400;font-feature-settings:'palt';transform:translate(0.53px,0.42px) scaleX(0.9683);">このビジュアルでのフィルター</span>
<span class="t" style="left:718px;top:225px;color:#3a3a3a;font-size:11px;line-height:15px;font-weight:400;font-feature-settings:'palt';transform:translate(0.21px,0.38px) scaleX(0.7250);">…</span>
<svg style="left:591px;top:246px" width="140" height="42"><rect x="1.70" y="1.70" width="136.30" height="38.40" rx="1" fill="#fff" stroke="#d8d8d8" stroke-width="1"/></svg>
<span class="t" style="left:597px;top:252px;color:#2c2c2c;font-size:9.8px;line-height:13.8px;font-weight:400;font-feature-settings:'palt';transform:translate(0.37px,0.34px) scaleX(0.9886);">日付</span>
<span class="t" style="left:598px;top:268px;color:#2c2c2c;font-size:10.3px;line-height:14.3px;font-weight:400;font-feature-settings:'palt';transform:translate(0.63px,0.50px) scaleX(0.9339);">(すべて) です</span>
<svg style="left:591px;top:291px" width="140" height="43"><rect x="1.75" y="2.05" width="136.20" height="38.70" rx="2" fill="#fff" stroke="#5a5856" stroke-width="1.1"/></svg>
<span class="t" style="left:602px;top:306px;color:#2c2c2c;font-size:10.3px;line-height:14.3px;font-weight:400;font-feature-settings:'palt';transform:translate(0.51px,0.49px) scaleX(0.9858);">ここにデータ フィールド</span>
<span class="t" style="left:704px;top:305px;color:#2c2c2c;font-size:11px;line-height:15px;font-weight:400;font-feature-settings:'palt';transform:translate(0.23px,0.38px) scaleX(0.7125);">…</span>
<span class="t" style="left:591px;top:355px;color:#3a3a3a;font-size:10.3px;line-height:14.3px;font-weight:400;font-feature-settings:'palt';transform:translate(0.55px,0.64px) scaleX(0.9527);">このページでのフィルター</span>
<span class="t" style="left:718px;top:353px;color:#3a3a3a;font-size:11px;line-height:15px;font-weight:400;font-feature-settings:'palt';transform:translate(0.21px,0.38px) scaleX(0.7250);">…</span>
<svg style="left:591px;top:374px" width="140" height="43"><rect x="1.75" y="1.95" width="136.20" height="38.70" rx="2" fill="#fff" stroke="#5a5856" stroke-width="1.1"/></svg>
<span class="t" style="left:602px;top:389px;color:#2c2c2c;font-size:10.3px;line-height:14.3px;font-weight:400;font-feature-settings:'palt';transform:translate(0.51px,0.38px) scaleX(0.9858);">ここにデータ フィールド</span>
<span class="t" style="left:704px;top:388px;color:#2c2c2c;font-size:11px;line-height:15px;font-weight:400;font-feature-settings:'palt';transform:translate(0.23px,0.27px) scaleX(0.7125);">…</span>
<span class="t" style="left:592px;top:439px;color:#3a3a3a;font-size:10.3px;line-height:14.3px;font-weight:400;font-feature-settings:'palt';transform:translate(0.03px,0.06px) scaleX(0.9389);">すべてのページでのフィルター</span>
<span class="t" style="left:718px;top:436px;color:#3a3a3a;font-size:11px;line-height:15px;font-weight:400;font-feature-settings:'palt';transform:translate(0.21px,0.57px) scaleX(0.7250);">…</span>
<svg style="left:591px;top:457px" width="140" height="43"><rect x="1.75" y="2.15" width="136.20" height="38.70" rx="2" fill="#fff" stroke="#5a5856" stroke-width="1.1"/></svg>
<span class="t" style="left:602px;top:472px;color:#2c2c2c;font-size:10.3px;line-height:14.3px;font-weight:400;font-feature-settings:'palt';transform:translate(0.51px,0.56px) scaleX(0.9858);">ここにデータ フィールド</span>
<span class="t" style="left:704px;top:471px;color:#2c2c2c;font-size:11px;line-height:15px;font-weight:400;font-feature-settings:'palt';transform:translate(0.23px,0.48px) scaleX(0.7125);">…</span>
<div style="left:736px;top:142px;width:1px;height:591px;background:#2e2e2e;"></div>
<span class="t" style="left:742px;top:150px;color:#fff;font-size:12.5px;line-height:16.5px;font-weight:700;font-feature-settings:'palt';transform:translate(0.26px,0.66px) scaleX(0.9676);">視覚化</span>
<svg style="left:876.5px;top:155.5px;" width="8" height="8" viewBox="0 0 8 8"><path d="M1 0.800 L3.200 3.800 L1 6.800 M3.400 0.800 L5.600 3.800 L3.400 6.800" fill="none" stroke="#f4f4f4" stroke-width="1.500"/></svg>
<span class="t" style="left:741px;top:176px;color:#fff;font-size:9.5px;line-height:13.5px;font-weight:700;font-feature-settings:'palt';transform:translate(0.61px,0.20px) scaleX(1.0356);">ビジュアルのビルド</span>
<div style="left:742.3px;top:194px;width:23.8px;height:26.7px;background:#262626;border-radius:3px;"></div>
<svg style="left:744px;top:196px;" width="21" height="23" viewBox="0 0 21 23"><path d="M1.200 1.900 H16" stroke="#8a8a8a" stroke-width="1.300"/><rect x="1.300" y="5.300" width="18" height="7" fill="#51ab94" stroke="#e8e8e8" stroke-width="0.900" stroke-dasharray="1.500 1.300"/><rect x="1.300" y="14.400" width="18" height="7" fill="#51ab94" stroke="#e8e8e8" stroke-width="0.900" stroke-dasharray="1.500 1.300"/></svg>
<svg style="left:795.5px;top:197.5px;" width="18" height="21" viewBox="0 0 18 21"><path d="M1.300 14 V8.500 H5.500 M5.500 12 V1.200 H10 V10 M10 5.500 H14.500 V8" fill="none" stroke="#b0b0b0" stroke-width="1.100"/><path d="M16.500 7 L9.500 15 C8.500 17 6.500 18.500 3.500 18.500 C5 17.500 5.500 16 6.500 14.500 L14.500 6 Z" fill="none" stroke="#b0b0b0" stroke-width="1.100" stroke-linejoin="round"/><path d="M2.500 19.800 H8.500" stroke="#b0b0b0" stroke-width="1"/></svg>
<svg style="left:843.5px;top:197px;" width="20" height="22" viewBox="0 0 20 22"><circle cx="8.500" cy="8.500" r="7.500" fill="none" stroke="#b8b8b8" stroke-width="1.100"/><path d="M14 14 L19 20" stroke="#c8c8c8" stroke-width="1.600"/><path d="M2.500 8.500 L5.500 6 L8 8 L13 4" fill="none" stroke="#b8b8b8" stroke-width="1"/><path d="M4 11 V14 M6.500 10.500 V15 M9 10.500 V15.300 M11.500 10 V14.500 M13.500 9 V12.500" stroke="#b8b8b8" stroke-width="0.900"/></svg>
<svg style="left:736px;top:222px;" width="154" height="12" viewBox="0 0 154 12"><path d="M0 9.400 H12.100 L18.300 3 L24.500 9.400 H154" fill="none" stroke="#6e6e6e" stroke-width="1"/></svg>
<svg style="left:839px;top:331px" width="21" height="23"><rect x="1.75" y="1.75" width="17.10" height="19.60" rx="2" fill="none" stroke="#a8a8a8" stroke-width="1.3"/></svg>
<svg style="left:745.9px;top:240.8px;" width="14" height="16" viewBox="0 0 14 16"><path d="M0.600 0.300 V14.500 H14" fill="none" stroke="#c9c9c9" stroke-width="1"/><rect x="0.6" y="2.2" width="4" height="3.4" fill="none" stroke="#c9c9c9" stroke-width="0.9"/><rect x="4.6" y="2.2" width="4.6" height="3.4" fill="#3272cf" stroke="#5b9df0" stroke-width="0.7"/><rect x="0.6" y="8.6" width="5" height="3.4" fill="none" stroke="#c9c9c9" stroke-width="0.9"/><rect x="5.6" y="8.6" width="6.4" height="3.4" fill="#7c7c7c" stroke="#9a9a9a" stroke-width="0.7"/></svg>
<svg style="left:769.95px;top:240.8px;" width="14" height="16" viewBox="0 0 14 16"><path d="M0.600 0.300 V14.500 H14" fill="none" stroke="#c9c9c9" stroke-width="1"/><rect x="2.6" y="9.5" width="3.4" height="5" fill="none" stroke="#c9c9c9" stroke-width="0.9"/><rect x="2.6" y="4.6" width="3.4" height="5" fill="#3272cf" stroke="#5b9df0" stroke-width="0.7"/><rect x="8.6" y="8" width="3.4" height="6.5" fill="none" stroke="#c9c9c9" stroke-width="0.9"/><rect x="8.6" y="2.2" width="3.4" height="5.8" fill="#7c7c7c" stroke="#9a9a9a" stroke-width="0.7"/></svg>
<svg style="left:794.0px;top:240.8px;" width="14" height="16" viewBox="0 0 14 16"><path d="M0.600 0.300 V14.500 H14" fill="none" stroke="#c9c9c9" stroke-width="1" /><rect x="0.8" y="1.2" width="12.7" height="2.8" fill="#3272cf" stroke="#5b9df0" stroke-width="0.7"/><rect x="0.8" y="4.3" width="7" height="2.9" fill="none" stroke="#c9c9c9" stroke-width="0.8"/><rect x="0.8" y="7.4" width="5" height="2.8" fill="#7c7c7c"/><rect x="0.8" y="10.5" width="9" height="3.3" fill="none" stroke="#c9c9c9" stroke-width="0.8"/></svg>
<svg style="left:818.05px;top:240.8px;" width="14" height="16" viewBox="0 0 14 16"><path d="M0.600 0.300 V14.500 H14" fill="none" stroke="#c9c9c9" stroke-width="1"/><rect x="1.5" y="0.8" width="3.2" height="13.7" fill="#3272cf" stroke="#5b9df0" stroke-width="0.6"/><rect x="5" y="6.5" width="2.8" height="8" fill="#7c7c7c"/><rect x="7.8" y="8.5" width="2" height="6" fill="#5a5a5a"/><rect x="10" y="4.5" width="3" height="10" fill="none" stroke="#c9c9c9" stroke-width="0.9"/></svg>
<svg style="left:842.1px;top:240.8px;" width="14" height="16" viewBox="0 0 14 16"><path d="M0.600 0.300 V14.500 H14" fill="none" stroke="#c9c9c9" stroke-width="1"/><rect x="0.6" y="2.2" width="3" height="3.4" fill="none" stroke="#c9c9c9" stroke-width="0.9"/><rect x="3.6" y="2.2" width="9" height="3.4" fill="#3272cf" stroke="#5b9df0" stroke-width="0.7"/><rect x="0.6" y="8.6" width="8.5" height="3.4" fill="none" stroke="#c9c9c9" stroke-width="0.9"/><rect x="9.1" y="8.6" width="3.5" height="3.4" fill="#7c7c7c" stroke="#9a9a9a" stroke-width="0.7"/></svg>
<svg style="left:866.15px;top:240.8px;" width="14" height="16" viewBox="0 0 14 16"><path d="M0.600 0.300 V14.500 H14" fill="none" stroke="#c9c9c9" stroke-width="1"/><rect x="3" y="2" width="3.4" height="10" fill="#3272cf" stroke="#5b9df0" stroke-width="0.7"/><rect x="3" y="12" width="3.4" height="2.5" fill="none" stroke="#c9c9c9" stroke-width="0.9"/><rect x="9" y="2" width="3.4" height="5" fill="#7c7c7c" stroke="#9a9a9a" stroke-width="0.7"/><rect x="9" y="7" width="3.4" height="7.5" fill="none" stroke="#c9c9c9" stroke-width="0.9"/></svg>
<svg style="left:745.9px;top:264.3px;" width="14" height="16" viewBox="0 0 14 16"><path d="M0.600 0.300 V14.500 H14" fill="none" stroke="#c9c9c9" stroke-width="1"/><path d="M1 13 L8.500 3.500 L13.500 9" fill="none" stroke="#5b9df0" stroke-width="1" /><path d="M1 9 L5 5 L8.500 9.500 L13.500 3.800" fill="none" stroke="#c9c9c9" stroke-width="1" /></svg>
<svg style="left:769.95px;top:264.3px;" width="14" height="16" viewBox="0 0 14 16"><path d="M8 8 L10.500 1.500 L13.500 10 V15 Z" fill="#7c7c7c" stroke="#7c7c7c" stroke-width="0.8" /><path d="M0.600 10 L4.500 2.500 L8 7.500" fill="none" stroke="#c9c9c9" stroke-width="1" /><path d="M0.600 10 L3.500 13 L8 7 L13.500 15 H0.600 Z" fill="#3272cf" stroke="#5b9df0" stroke-width="0.6" /></svg>
<svg style="left:794.0px;top:264.3px;" width="14" height="16" viewBox="0 0 14 16"><path d="M0.600 0.300 V14.500 H14" fill="none" stroke="#c9c9c9" stroke-width="1"/><path d="M1 4.500 L5 8 L9.500 2 L11.500 5 H13.500 V11.500 L9.500 8.500 L5 13 L1 9.500 Z" fill="#3272cf" stroke="#5b9df0" stroke-width="0.6" /></svg>
<svg style="left:818.05px;top:264.3px;" width="14" height="16" viewBox="0 0 14 16"><path d="M0.600 0.300 V14.500 H14" fill="none" stroke="#c9c9c9" stroke-width="1"/><path d="M1 2 H13.500 V11.500 L9.500 7.500 L4.500 12.500 L1 9 Z" fill="#3272cf" stroke="#5b9df0" stroke-width="0.6" /></svg>
<svg style="left:842.1px;top:264.3px;" width="14" height="16" viewBox="0 0 14 16"><path d="M0.600 0.300 V14.500 H14" fill="none" stroke="#c9c9c9" stroke-width="1"/><rect x="3" y="2" width="3.4" height="8" fill="#3272cf" stroke="#5b9df0" stroke-width="0.7"/><rect x="3" y="10" width="3.4" height="4.5" fill="none" stroke="#c9c9c9" stroke-width="0.8"/><rect x="9" y="2" width="3" height="4" fill="#7c7c7c"/><rect x="9" y="6" width="3" height="8.5" fill="none" stroke="#c9c9c9" stroke-width="0.8"/><path d="M1 12.500 L5 8 L9 11 L13.500 6.500" fill="none" stroke="#c9c9c9" stroke-width="1" /></svg>
<svg style="left:866.15px;top:264.3px;" width="14" height="16" viewBox="0 0 14 16"><path d="M0.600 0.300 V14.500 H14" fill="none" stroke="#c9c9c9" stroke-width="1"/><rect x="3" y="7" width="3" height="7.5" fill="#3272cf" stroke="#5b9df0" stroke-width="0.6"/><rect x="6.5" y="1" width="3" height="13.5" fill="none" stroke="#c9c9c9" stroke-width="0.9"/><rect x="10" y="5" width="3" height="9.5" fill="#7c7c7c"/><path d="M1 13 L5 8.500 L9 11.500 L13.500 6" fill="none" stroke="#c9c9c9" stroke-width="1" /></svg>
<svg style="left:745.9px;top:287.8px;" width="14" height="16" viewBox="0 0 14 16"><path d="M0.600 0.300 V14.500 H14" fill="none" stroke="#c9c9c9" stroke-width="1"/><path d="M2 3 L7 7 L13 2 V7 L7 11 L2 7 Z" fill="#7c7c7c" stroke="#7c7c7c" stroke-width="0.5" /><rect x="1.8" y="9.8" width="3" height="3" fill="#f29a2e"/><rect x="10" y="9.8" width="3" height="3" fill="#f29a2e"/><rect x="5.5" y="7.5" width="3" height="3" fill="#f29a2e"/><path d="M2 8 C4 8 5 12 7.500 12 C10 12 10.500 6.500 13 6.500" fill="none" stroke="#5b9df0" stroke-width="1.5" /></svg>
<svg style="left:769.95px;top:287.8px;" width="14" height="16" viewBox="0 0 14 16"><path d="M0.600 0.300 V14.500 H14" fill="none" stroke="#c9c9c9" stroke-width="1"/><rect x="2.2" y="5" width="3" height="9.5" fill="#7c7c7c"/><rect x="5.2" y="5" width="2.3" height="3" fill="#5a5a5a"/><rect x="7.5" y="1.5" width="1.5" height="7" fill="#5b9df0"/><rect x="9.5" y="1.5" width="3.2" height="13" fill="none" stroke="#c9c9c9" stroke-width="0.9"/></svg>
<svg style="left:794.0px;top:287.8px;" width="14" height="16" viewBox="0 0 14 16"><rect x="0.6" y="1.2" width="12.8" height="4.2" fill="#3272cf" stroke="#5b9df0" stroke-width="0.7"/><rect x="2.6" y="6" width="8.8" height="3.6" fill="#3272cf" stroke="#5b9df0" stroke-width="0.7"/><rect x="4.6" y="10.2" width="4.8" height="3.6" fill="#3272cf" stroke="#5b9df0" stroke-width="0.7"/></svg>
<svg style="left:818.05px;top:287.8px;" width="14" height="16" viewBox="0 0 14 16"><path d="M0.600 0.300 V14.500 H14" fill="none" stroke="#c9c9c9" stroke-width="1"/><rect x="2.5" y="3.8" width="2.4" height="2.4" fill="#3272cf"/><rect x="6.2" y="6.2" width="2.4" height="2.4" fill="#3272cf"/><rect x="10" y="9.6" width="2.4" height="2.4" fill="#3272cf"/><rect x="10" y="1.3" width="2.5" height="2.5" fill="#f0f0f0"/><rect x="2.5" y="10.5" width="2.5" height="2.5" fill="#f0f0f0"/></svg>
<svg style="left:842.1px;top:287.8px;" width="14" height="16" viewBox="0 0 14 16"><circle cx="7" cy="7.500" r="6.500" fill="none" stroke="#d0d0d0" stroke-width="1"/><path d="M7 1 A6.500 6.500 0 0 1 11.500 12.200 L7 8 Z" fill="#3272cf" stroke="#5b9df0" stroke-width="0.5" /></svg>
<svg style="left:866.15px;top:287.8px;" width="14" height="16" viewBox="0 0 14 16"><circle cx="7" cy="7.500" r="4.900" fill="none" stroke="#d0d0d0" stroke-width="3.300"/><circle cx="7" cy="7.500" r="4.900" fill="none" stroke="#141414" stroke-width="1.600"/><circle cx="7" cy="7.500" r="4.900" fill="none" stroke="#3a80dc" stroke-width="3.300" stroke-dasharray="23.500 7.300" transform="rotate(-82 7 7.500)"/></svg>
<svg style="left:745.9px;top:311.3px;" width="14" height="16" viewBox="0 0 14 16"><rect x="0.6" y="0.6" width="12.8" height="14.3" fill="none" stroke="#c9c9c9" stroke-width="1"/><rect x="0.6" y="0.6" width="6.2" height="7.1" fill="#3272cf" stroke="#5b9df0" stroke-width="0.6"/><rect x="0.6" y="8.2" width="6.2" height="6.7" fill="#3272cf" stroke="#5b9df0" stroke-width="0.6"/><path d="M6.800 4 H13.400 M9.500 4 V14.900 M9.500 9 H13.400" fill="none" stroke="#c9c9c9" stroke-width="0.9" /></svg>
<svg style="left:769.95px;top:311.3px;" width="14" height="16" viewBox="0 0 14 16"><circle cx="7.300" cy="6.800" r="4.600" fill="none" stroke="#cfcfcf" stroke-width="1"/><path d="M5.500 4.500 C6.500 3.500 8.500 3.500 9.500 5 C8.500 6.500 7.500 6 6.500 7.500 C7.500 8.500 8.500 8.500 8.500 10 C7 10.500 5.500 9.500 5 8 Z" fill="#3ea84a" stroke="#3ea84a" stroke-width="0.3" /><path d="M6 0.500 C1 2.500 0.500 9.500 5.500 12.500 M7.300 12.500 V14.500 M3 14.900 H11.500" fill="none" stroke="#bdbdbd" stroke-width="1" /></svg>
<svg style="left:794.0px;top:311.3px;" width="14" height="16" viewBox="0 0 14 16"><path d="M0.800 1.500 L4 1 L5.500 3.500 L9 3.500 L12 1 L13.500 2.500 V9 C13 12 10 13.500 7 15 C3.500 13.500 1 11.500 0.800 8 L2 5 Z" fill="#7c7c7c" stroke="#bdbdbd" stroke-width="0.9" /><path d="M0.800 1.500 L4 1 L5.500 3.500 L6 7.500 L2 7.500 L2.200 5 Z" fill="#3272cf" stroke="#5b9df0" stroke-width="0.4" /><path d="M8 8 H13.500 C13 11 11.500 12.500 8.500 13.500 L9.500 11 L8 10.500 Z" fill="#3272cf" stroke="#5b9df0" stroke-width="0.4" /></svg>
<svg style="left:818.05px;top:311.3px;" width="14" height="16" viewBox="0 0 14 16"><path d="M8.500 0 L0.500 14 L8 11 Z" fill="#4aa3de" stroke="#4aa3de" stroke-width="0.3" /><path d="M8.500 0 L8 11 L12.500 16 Z" fill="#2f7de0" stroke="#2f7de0" stroke-width="0.3" /></svg>
<svg style="left:842.1px;top:311.3px;" width="14" height="16" viewBox="0 0 14 16"><path d="M1 11.500 A6 6 0 0 1 7 5" fill="none" stroke="#d0d0d0" stroke-width="2.8" /><path d="M1 11.500 A6 6 0 0 1 7 5" fill="none" stroke="#141414" stroke-width="1.2" /><path d="M6.500 5 A6 6 0 0 1 13 11.500" fill="none" stroke="#3a80dc" stroke-width="2.8" /><path d="M7 11.500 L10 8" fill="none" stroke="#e8e8e8" stroke-width="1.3" /></svg>
<svg style="left:866.15px;top:311.3px;" width="14" height="16" viewBox="0 0 14 16"><rect x="0.6" y="2.3" width="12.8" height="10.7" fill="none" stroke="#cfcfcf" stroke-width="1"/><text x="1.6" y="10.3" font-size="7.2" fill="#3f8be0" font-family="'Liberation Sans',sans-serif" textLength="10.800" lengthAdjust="spacingAndGlyphs">123</text><path d="M2 11.200 H12" fill="none" stroke="#777" stroke-width="0.8" /></svg>
<svg style="left:745.9px;top:334.8px;" width="14" height="16" viewBox="0 0 14 16"><rect x="0.6" y="0.6" width="12.8" height="13.8" fill="none" stroke="#cfcfcf" stroke-width="1"/><path d="M2.800 2.500 V12.500" fill="none" stroke="#9a9a9a" stroke-width="0.8" /><path d="M4.300 4.300 H11.500 M4.300 9.300 H11.500" fill="none" stroke="#8cc0f8" stroke-width="1.5" /><path d="M4.300 6.500 H8 M4.300 11.500 H8" fill="none" stroke="#bdbdbd" stroke-width="0.9" /></svg>
<svg style="left:769.95px;top:334.8px;" width="14" height="16" viewBox="0 0 14 16"><rect x="0.6" y="1.6" width="12.8" height="11.8" fill="none" stroke="#cfcfcf" stroke-width="1"/><path d="M2.300 8.500 L4.700 3.500 L7.100 8.500 Z" fill="#5fc46b" stroke="#5fc46b" stroke-width="0.3" /><path d="M7.800 3.800 H12.200 L10 8.800 Z" fill="#e04a4a" stroke="#e04a4a" stroke-width="0.3" /><path d="M2 11 H12" fill="none" stroke="#bdbdbd" stroke-width="0.9" /></svg>
<svg style="left:794.0px;top:334.8px;" width="14" height="16" viewBox="0 0 14 16"><rect x="0.6" y="0.6" width="12.4" height="13.8" fill="none" stroke="#cfcfcf" stroke-width="1"/><path d="M0.600 2.500 H13 M0.600 4.300 H13" fill="none" stroke="#9a9a9a" stroke-width="0.9" /><rect x="2.8" y="6" width="2.2" height="2.2" fill="#8a8a8a"/><rect x="2.8" y="10" width="2.2" height="2.8" fill="#8a8a8a"/><path d="M7.500 8.300 H14 L11.800 11 V15.300 H9.700 V11 Z" fill="#141414" stroke="#e6e6e6" stroke-width="1" /></svg>
<svg style="left:818.05px;top:334.8px;" width="14" height="16" viewBox="0 0 14 16"><rect x="0.6" y="0.6" width="12.8" height="13.8" fill="none" stroke="#d0d0d0" stroke-width="1"/><rect x="0.6" y="0.6" width="12.8" height="2.4" fill="#8a8a8a"/><path d="M0.600 3.200 H13.400 M0.600 6.900 H13.400 M0.600 10.600 H13.400 M4.900 3.200 V14.400 M9.100 3.200 V14.400" fill="none" stroke="#d0d0d0" stroke-width="0.9" /></svg>
<svg style="left:842.1px;top:334.8px;" width="14" height="16" viewBox="0 0 14 16"><rect x="0.6" y="0.6" width="12.8" height="13.8" fill="none" stroke="#d0d0d0" stroke-width="1"/><rect x="0.6" y="0.6" width="12.8" height="2.4" fill="#8a8a8a"/><rect x="9.1" y="3.2" width="4.3" height="11.2" fill="#3272cf"/><rect x="0.6" y="10.6" width="12.8" height="3.8" fill="#3272cf"/><path d="M0.600 3.200 H13.400 M0.600 6.900 H13.400 M0.600 10.600 H13.400 M4.900 3.200 V14.400 M9.100 3.200 V14.400" fill="none" stroke="#d8e6f8" stroke-width="0.8" /></svg>
<svg style="left:866.15px;top:334.8px;" width="14" height="16" viewBox="0 0 14 16"><text x="3" y="13.2" font-size="14.5" fill="#4a97e8" font-family="'Liberation Sans',sans-serif" textLength="7.500" lengthAdjust="spacingAndGlyphs" stroke="#4a97e8" stroke-width="0.300">R</text></svg>
<svg style="left:745.9px;top:358.3px;" width="14" height="16" viewBox="0 0 14 16"><text x="-0.3" y="11.5" font-size="14.5" fill="#4a97e8" font-family="'Liberation Sans',sans-serif" textLength="14" lengthAdjust="spacingAndGlyphs">Py</text></svg>
<svg style="left:769.95px;top:358.3px;" width="14" height="16" viewBox="0 0 14 16"><path d="M0.600 0.300 V15 H14" fill="none" stroke="#c9c9c9" stroke-width="1" /><path d="M0.600 3 H10" fill="none" stroke="#5b9df0" stroke-width="1" /><circle cx="11" cy="3" r="1.900" fill="#3a80dc" stroke="#5b9df0" stroke-width="0.500"/><path d="M0.600 7.500 H7" fill="none" stroke="#9a9a9a" stroke-width="1" /><circle cx="8" cy="7.500" r="1.400" fill="#9a9a9a"/><path d="M0.600 11 H4.500" fill="none" stroke="#9a9a9a" stroke-width="1" /><circle cx="5.300" cy="11" r="1.300" fill="#9a9a9a"/></svg>
<svg style="left:794.0px;top:358.3px;" width="14" height="16" viewBox="0 0 14 16"><path d="M5.500 7.500 H8 M8.500 2.500 H7.300 V12.500 H8.500" fill="none" stroke="#bdbdbd" stroke-width="1" /><rect x="0.5" y="5.7" width="4.8" height="3.7" fill="#3272cf" stroke="#5b9df0" stroke-width="0.7"/><rect x="8.6" y="0.8" width="5" height="3.5" fill="#3272cf" stroke="#5b9df0" stroke-width="0.7"/><rect x="8.6" y="5.8" width="5" height="3.5" fill="#3272cf" stroke="#5b9df0" stroke-width="0.7"/><rect x="8.6" y="10.8" width="5" height="3.5" fill="#3272cf" stroke="#5b9df0" stroke-width="0.7"/></svg>
<svg style="left:818.05px;top:358.3px;" width="14" height="16" viewBox="0 0 14 16"><path d="M1.500 1.300 H12.500 Q13.300 1.300 13.300 2.100 V10.200 Q13.300 11 12.500 11 H5.800 L3.200 14.300 V11 H1.500 Q0.700 11 0.700 10.200 V2.100 Q0.700 1.300 1.500 1.300 Z" fill="none" stroke="#6fa4dc" stroke-width="1.1" /></svg>
<svg style="left:842.1px;top:358.3px;" width="14" height="16" viewBox="0 0 14 16"><path d="M2.500 4.500 V0.700 H8 L11.500 4.300 V14.700 H2.500 V8.500 M8 0.700 V4.300 H11.500" fill="none" stroke="#d0d0d0" stroke-width="1" /><circle cx="2.300" cy="6.400" r="1.500" fill="#3a80dc" stroke="#7ab4f5" stroke-width="0.600"/><path d="M5.500 7.500 H9.500 M4 10 H8.500" fill="none" stroke="#5b9df0" stroke-width="1.1" /></svg>
<svg style="left:866.15px;top:358.3px;" width="14" height="16" viewBox="0 0 14 16"><path d="M3.500 1.500 H10.500 V6 C10.500 8.500 9 10 7 10 C5 10 3.500 8.500 3.500 6 Z M3.500 2.500 H1 C0.500 5 2 7 4 7.500 M10.500 2.500 H13 C13.500 5 12 7 10 7.500 M7 10 V12.500" fill="none" stroke="#d0d0d0" stroke-width="1" /><rect x="3.3" y="0.7" width="7.4" height="1.8" fill="#4a97e8"/><rect x="3.8" y="12.8" width="6.4" height="2" fill="#4a97e8" stroke="#6fb0f5" stroke-width="0.5"/></svg>
<svg style="left:745.9px;top:381.8px;" width="14" height="16" viewBox="0 0 14 16"><path d="M1.500 1.200 H8 L12 5 V16 H1.500 Z M8 1.200 V5 H12" fill="none" stroke="#d8d8d8" stroke-width="1.1" /><path d="M4 13.500 V9.500 M6.800 13.500 V11 M9.500 13.500 V7.500" fill="none" stroke="#d8d8d8" stroke-width="1.3" /></svg>
<svg style="left:769.95px;top:381.8px;" width="14" height="16" viewBox="0 0 14 16"><rect x="1.3" y="3.8" width="12.2" height="10.4" fill="none" stroke="#bdbdbd" stroke-width="1"/><text x="3" y="11.3" font-size="7.2" fill="#3f8be0" font-family="'Liberation Sans',sans-serif" textLength="10" lengthAdjust="spacingAndGlyphs">123</text><path d="M3 12.500 H12" fill="none" stroke="#8a8a8a" stroke-width="0.8" /><path d="M4.500 0 H8.500 L6.300 4.500 H9 L2.500 11.500 L4 6.500 H1.500 Z" fill="#f2a33a" stroke="#141414" stroke-width="0.5" /></svg>
<svg style="left:794.0px;top:381.8px;" width="14" height="16" viewBox="0 0 14 16"><rect x="8" y="2" width="5" height="5.5" fill="none" stroke="#9a9a9a" stroke-width="1"/><rect x="1.5" y="9.5" width="4.8" height="5" fill="none" stroke="#9a9a9a" stroke-width="1"/><rect x="4.5" y="4" width="2.5" height="4" fill="#4a97e8"/><path d="M7.500 8.800 H14 L11.800 11.500 V16 H9.700 V11.500 Z" fill="#141414" stroke="#e6e6e6" stroke-width="1" /><path d="M4.500 0 H8.500 L6.300 4.500 H9 L2.500 11.500 L4 6.500 H1.500 Z" fill="#f2a33a" stroke="#141414" stroke-width="0.5" /></svg>
<svg style="left:818.05px;top:381.8px;" width="14" height="16" viewBox="0 0 14 16"><path d="M5.500 1.800 H13 V7 M9 15 H1.800 V9.500" fill="none" stroke="#62a8f0" stroke-width="1.1" /><path d="M12 2.500 C9 5 10 6 8 8 C6.500 9.500 7.500 12 3 14.500 L2.500 11 C5 10 4.500 8 6.500 6.500 C8 5 7 4 9 2.500 Z" fill="#3a80dc" stroke="#3a80dc" stroke-width="0.3" /><path d="M0.500 2 C0.500 0.300 4.500 0.300 4.500 2 V6 L2.500 8.500 L0.500 6 Z" fill="#f2902e" stroke="#f2902e" stroke-width="0.4" /><circle cx="2.500" cy="3" r="0.900" fill="#222"/><circle cx="11.800" cy="13" r="2.100" fill="#f2902e"/><circle cx="13.200" cy="8.800" r="1.300" fill="#f2902e"/></svg>
<svg style="left:842.1px;top:381.8px;" width="14" height="16" viewBox="0 0 14 16"><path d="M7 1.800 L13 8.500 L8 15 H6 L0.700 8.500 L6 1.800 Z M6 1.800 L12 8.500 M8 1.800 L2 8.500 L7 15 M4.500 11.500 L10.500 5 M3.500 5 L10 12" fill="none" stroke="#8a3a9e" stroke-width="1" /></svg>
<svg style="left:866.15px;top:381.8px;" width="14" height="16" viewBox="0 0 14 16"><path d="M0.800 2.200 H9.500 L13.500 8 L9.500 14 H0.800 L5 8 Z M9 3 L2.500 13.500 M12.500 7 L7 14" fill="none" stroke="#3578d4" stroke-width="1.1" /></svg>
<svg style="left:748px;top:410.5px;" width="10" height="4" viewBox="0 0 10 4"><circle cx="1.500" cy="1.800" r="1" fill="#e8e8f0"/><circle cx="4.800" cy="1.800" r="1" fill="#e8e8f0"/><circle cx="8" cy="1.800" r="1" fill="#e8e8f0"/></svg>
<div style="left:736.5px;top:428.2px;width:152.5px;height:1.2px;background:#8e8e8e;"></div>
<span class="t" style="left:744px;top:435px;color:#fafafa;font-size:10.6px;line-height:14.6px;font-weight:500;font-feature-settings:'palt';transform:translate(0.87px,0.56px) scaleX(0.9400);">行</span>
<svg style="left:739.5px;top:456px;" width="146" height="23" viewBox="0 0 146 23"><rect x="0.500" y="0.500" width="145" height="22" rx="0.8" fill="none" stroke="#6c6c6c" stroke-width="1" stroke-dasharray="2.500 1.700"/></svg>
<span class="t" style="left:747px;top:462px;color:#fafafa;font-size:10.3px;line-height:14.3px;font-weight:500;font-feature-settings:'palt';transform:translate(0.03px,0.21px) scaleX(0.9697);">ここにデータ フィールドを追加</span>
<span class="t" style="left:876px;top:461px;color:#fafafa;font-size:10.3px;line-height:14.3px;font-weight:500;font-feature-settings:'palt';transform:translate(0.11px,0.75px) scaleX(0.7097);">…</span>
<svg style="left:735px;top:482px" width="155" height="62"><rect x="2.60" y="2.20" width="150.20" height="57.00" rx="0" fill="none" stroke="#ec4827" stroke-width="2.4"/></svg>
<span class="t" style="left:744px;top:487px;color:#fafafa;font-size:10.6px;line-height:14.6px;font-weight:500;font-feature-settings:'palt';transform:translate(0.85px,0.91px) scaleX(0.9895);">列</span>
<svg style="left:739.5px;top:508.2px;" width="146" height="30.5" viewBox="0 0 146 30.5"><rect x="0.500" y="0.500" width="145" height="29.5" rx="0.8" fill="none" stroke="#6c6c6c" stroke-width="1" stroke-dasharray="2.500 1.700"/></svg>
<svg style="left:740px;top:510px" width="144" height="22"><rect x="2.25" y="2.00" width="140.00" height="18.20" rx="3" fill="#1f1f1f" stroke="#4e4e4e" stroke-width="1"/></svg>
<span class="t" style="left:744px;top:515px;color:#fafafa;font-size:10.3px;line-height:14.3px;font-weight:500;font-feature-settings:'palt';transform:translate(0.12px,0.15px) scaleX(0.9324);">日付</span>
<svg style="left:861px;top:518.5px;" width="7" height="5" viewBox="0 0 7 5"><path d="M0.500 0.500 L3.300 3.700 L6.200 0.500" fill="none" stroke="#d8e8f8" stroke-width="1.200"/></svg>
<svg style="left:873.5px;top:518px;" width="6" height="6" viewBox="0 0 6 6"><path d="M0.500 0.500 L5.300 5.300 M5.300 0.500 L0.500 5.300" fill="none" stroke="#e0e0f0" stroke-width="1.100"/></svg>
<span class="t" style="left:744px;top:547px;color:#fafafa;font-size:10.6px;line-height:14.6px;font-weight:500;font-feature-settings:'palt';transform:translate(0.87px,0.82px) scaleX(0.9400);">値</span>
<svg style="left:739.5px;top:568.2px;" width="146" height="23" viewBox="0 0 146 23"><rect x="0.500" y="0.500" width="145" height="22" rx="0.8" fill="none" stroke="#6c6c6c" stroke-width="1" stroke-dasharray="2.500 1.700"/></svg>
<span class="t" style="left:747px;top:574px;color:#fafafa;font-size:10.3px;line-height:14.3px;font-weight:500;font-feature-settings:'palt';transform:translate(0.03px,0.33px) scaleX(0.9697);">ここにデータ フィールドを追加</span>
<span class="t" style="left:876px;top:573px;color:#fafafa;font-size:10.3px;line-height:14.3px;font-weight:500;font-feature-settings:'palt';transform:translate(0.11px,0.95px) scaleX(0.7097);">…</span>
<span class="t" style="left:744px;top:600px;color:#fff;font-size:10.8px;line-height:14.8px;font-weight:700;font-feature-settings:'palt';transform:translate(0.57px,0.14px) scaleX(0.9126);">ドリルスルー</span>
<span class="t" style="left:745px;top:622px;color:#fafafa;font-size:10.3px;line-height:14.3px;font-weight:500;font-feature-settings:'palt';transform:translate(0.32px,0.21px) scaleX(0.9651);">クロス レポート</span>
<svg style="left:847px;top:620px" width="28" height="17"><rect x="2.40" y="1.90" width="23.70" height="12.80" rx="6.9" fill="none" stroke="#b8b8b8" stroke-width="1"/></svg>
<svg style="left:852px;top:624px" width="9" height="9"><rect x="1.00" y="1.20" width="6.30" height="6.30" rx="3.15" fill="#b8b8b8"/></svg>
<span class="t" style="left:745px;top:645px;color:#fafafa;font-size:10.3px;line-height:14.3px;font-weight:500;font-feature-settings:'palt';transform:translate(0.56px,0.24px) scaleX(0.9600);">すべてのフィルターを保</span>
<svg style="left:847px;top:643px" width="28" height="16"><rect x="1.90" y="1.10" width="24.70" height="13.70" rx="6.85" fill="#51ab94"/></svg>
<svg style="left:862px;top:647px" width="9" height="9"><rect x="1.40" y="1.00" width="6.40" height="6.40" rx="3.2" fill="#1c1c1c"/></svg>
<svg style="left:853.5px;top:648px;" width="8" height="7" viewBox="0 0 8 7"><path d="M0.700 3.500 L2.800 5.700 L7 0.800" fill="none" stroke="#1f3f36" stroke-width="1"/></svg>
<span class="t" style="left:745px;top:660px;color:#fafafa;font-size:10.3px;line-height:14.3px;font-weight:500;font-feature-settings:'palt';transform:translate(0.56px,0.52px) scaleX(0.9441);">持する</span>
<div style="left:739.4px;top:683.3px;width:145.6px;height:22.7px;background:#000;"></div>
<svg style="left:739.4px;top:683.3px;" width="145.6" height="22.7" viewBox="0 0 145.6 22.7"><rect x="0.500" y="0.500" width="144.6" height="21.7" rx="0.8" fill="none" stroke="#808080" stroke-width="1" stroke-dasharray="1.300 1.300"/></svg>
<span class="t" style="left:745px;top:688px;color:#fafafa;font-size:10.3px;line-height:14.3px;font-weight:500;font-feature-settings:'palt';transform:translate(0.15px,0.30px) scaleX(0.9975);">ドリルスルー フィールドをこ</span>
<span class="t" style="left:864px;top:688px;color:#fafafa;font-size:10.3px;line-height:14.3px;font-weight:500;font-feature-settings:'palt';transform:translate(0.63px,0.25px) scaleX(0.7742);">…</span>
<span class="t" style="left:895px;top:149px;color:#fff;font-size:13px;line-height:17px;font-weight:700;font-feature-settings:'palt';transform:translate(0.29px,0.11px) scaleX(1.0225);">データ</span>
<svg style="left:1011px;top:155.7px;" width="8" height="8" viewBox="0 0 8 8"><path d="M1 0.800 L3.200 3.800 L1 6.800 M3.400 0.800 L5.600 3.800 L3.400 6.800" fill="none" stroke="#f4f4f4" stroke-width="1.500"/></svg>
<svg style="left:892px;top:181px" width="131" height="23"><rect x="2.00" y="1.80" width="127.20" height="19.50" rx="3" fill="#232323" stroke="#5c5c5c" stroke-width="1"/></svg>
<svg style="left:903px;top:186.5px;" width="12" height="12" viewBox="0 0 12 12"><circle cx="4.800" cy="4.800" r="4.200" fill="none" stroke="#a8a8a8" stroke-width="1"/><path d="M7.800 7.800 L11.300 11.500" stroke="#a8a8a8" stroke-width="1"/></svg>
<span class="t" style="left:918px;top:185px;color:#8a8a8a;font-size:12px;line-height:16px;font-weight:400;font-feature-settings:'palt';transform:translate(0.37px,0.27px) scaleX(0.9304);">検索</span>
<svg style="left:901px;top:217.5px;" width="8" height="5" viewBox="0 0 8 5"><path d="M0.700 0.700 L3.700 4 L6.700 0.700" fill="none" stroke="#e0e0e0" stroke-width="1.100"/></svg>
<svg style="left:912px;top:214.5px;" width="10" height="11" viewBox="0 0 10 11"><rect x="0.500" y="0.800" width="8.500" height="9.200" rx="1.300" fill="none" stroke="#dcdcdc" stroke-width="1"/><path d="M0.500 3.500 H9 M3.300 0.800 V10 M6.300 0.800 V10" stroke="#dcdcdc" stroke-width="0.900" fill="none"/></svg>
<svg style="left:917px;top:221px;" width="9" height="9" viewBox="0 0 9 9"><circle cx="4.400" cy="4.300" r="4.300" fill="#2f7a64"/><path d="M2.500 4.400 L3.900 5.800 L6.400 3" fill="none" stroke="#fff" stroke-width="1"/></svg>
<span class="t" style="left:925px;top:213px;color:#f6f6f6;font-size:10.6px;line-height:14.6px;font-weight:400;font-feature-settings:'palt';transform:translate(0.19px,0.43px) scaleX(0.8249);">Sheet1 (2)</span>
<svg style="left:922px;top:234px" width="12" height="12"><rect x="1.80" y="1.70" width="8.60" height="8.80" rx="1.5" fill="none" stroke="#8e8e8e" stroke-width="1"/></svg>
<svg style="left:938.5px;top:235.0px;" width="9" height="11" viewBox="0 0 9 11"><path d="M7.600 2.500 V0.800 H0.700 L4.600 5.200 L0.700 9.700 H7.600 V8" fill="none" stroke="#e6e6e6" stroke-width="1.100"/></svg>
<span class="t" style="left:951px;top:234px;color:#f8f8f8;font-size:10.3px;line-height:14.3px;font-weight:500;font-feature-settings:'palt';transform:translate(0.34px,0.23px) scaleX(0.9165);">実績</span>
<svg style="left:922px;top:254px" width="12" height="13"><rect x="1.30" y="1.50" width="9.60" height="9.80" rx="1.5" fill="#51ab94"/></svg>
<svg style="left:923.3px;top:255.5px;" width="10" height="10" viewBox="0 0 10 10"><path d="M2.300 5 L4.200 7 L7.600 3" fill="none" stroke="#1e4a3e" stroke-width="1"/></svg>
<svg style="left:938px;top:255.5px;" width="10" height="10.5" viewBox="0 0 10 10.5"><rect x="0.700" y="0.700" width="8.500" height="9" rx="2.200" fill="none" stroke="#e0e0e0" stroke-width="1.100"/><path d="M0.700 3.400 H9.200" stroke="#e0e0e0" stroke-width="1"/><path d="M2.600 5.600 H7.400 M2.600 7.500 H7.400" stroke="#c4c4c4" stroke-width="1" stroke-dasharray="1 0.900"/></svg>
<svg style="left:913.5px;top:257.0px;" width="5" height="8" viewBox="0 0 5 8"><path d="M0.700 0.700 L4 3.800 L0.700 7" fill="none" stroke="#e0e0e0" stroke-width="1.100"/></svg>
<span class="t" style="left:950px;top:254px;color:#f8f8f8;font-size:10.3px;line-height:14.3px;font-weight:500;font-feature-settings:'palt';transform:translate(0.57px,0.53px) scaleX(0.9297);">日付</span>
<svg style="left:922px;top:274px" width="12" height="13"><rect x="1.80" y="2.10" width="8.60" height="8.80" rx="1.5" fill="none" stroke="#8e8e8e" stroke-width="1"/></svg>
<svg style="left:938.5px;top:275.40000000000003px;" width="9" height="11" viewBox="0 0 9 11"><path d="M7.600 2.500 V0.800 H0.700 L4.600 5.200 L0.700 9.700 H7.600 V8" fill="none" stroke="#e6e6e6" stroke-width="1.100"/></svg>
<span class="t" style="left:951px;top:274px;color:#f8f8f8;font-size:10.3px;line-height:14.3px;font-weight:500;font-feature-settings:'palt';transform:translate(0.34px,0.75px) scaleX(0.9165);">予算</span>
<svg style="left:922px;top:294px" width="12" height="13"><rect x="1.80" y="2.10" width="8.60" height="8.80" rx="1.5" fill="none" stroke="#8e8e8e" stroke-width="1"/></svg>
<svg style="left:938.5px;top:295.40000000000003px;" width="9" height="11" viewBox="0 0 9 11"><path d="M7.600 2.500 V0.800 H0.700 L4.600 5.200 L0.700 9.700 H7.600 V8" fill="none" stroke="#e6e6e6" stroke-width="1.100"/></svg>
<span class="t" style="left:951px;top:294px;color:#f8f8f8;font-size:10.3px;line-height:14.3px;font-weight:500;font-feature-settings:'palt';transform:translate(0.35px,0.75px) scaleX(0.9042);">予算差</span>
<svg style="left:39.5px;top:708.5px;" width="13" height="14" viewBox="0 0 13 14"><rect x="0.800" y="0.800" width="11.300" height="9.500" rx="2" fill="none" stroke="#f0f0f0" stroke-width="1.200"/><path d="M4.500 10.500 V12.500 M8.300 10.500 V12.500 M2.500 12.800 H10.300" stroke="#f0f0f0" stroke-width="1.100" fill="none"/></svg>
<div style="left:37px;top:726.5px;width:18px;height:2.3px;background:#51ab94;"></div>
<svg style="left:74.5px;top:707.5px;" width="9" height="16" viewBox="0 0 9 16"><rect x="0.700" y="0.700" width="7.600" height="14.500" rx="1.800" fill="none" stroke="#f0f0f0" stroke-width="1.200"/><path d="M3.300 12.800 H5.700" stroke="#f0f0f0" stroke-width="1"/></svg>
<svg style="left:99.5px;top:714.5px;" width="5" height="8" viewBox="0 0 5 8"><path d="M4.300 0.700 L0.700 3.800 L4.300 7 Z" fill="none" stroke="#a0a0a0" stroke-width="0.900"/></svg>
<svg style="left:115px;top:714.5px;" width="5" height="8" viewBox="0 0 5 8"><path d="M0.700 0.700 L4.300 3.800 L0.700 7 Z" fill="none" stroke="#a0a0a0" stroke-width="0.900"/></svg>
<div style="left:124.5px;top:703px;width:1px;height:29px;background:#454545;"></div>
<div style="left:125.5px;top:729px;width:63.5px;height:3px;background:#51ab94;"></div>
<span class="t" style="left:139px;top:712px;color:#fafafa;font-size:10.3px;line-height:14.3px;font-weight:500;font-feature-settings:'palt';transform:translate(0.28px,0.24px) scaleX(0.9643);">ページ1</span>
<div style="left:189px;top:703px;width:29.2px;height:29px;background:#53ab95;"></div>
<svg style="left:198px;top:711px;" width="12" height="12" viewBox="0 0 12 12"><path d="M1 5.900 H10 M5.500 1.400 V10.400" stroke="#181818" stroke-width="2" fill="none"/></svg>
<span class="t" style="left:1px;top:736px;color:#f0f0f0;font-size:10.5px;line-height:14.5px;font-weight:400;font-feature-settings:'palt';transform:translate(0.24px,0.83px) scaleX(0.8758);">ページ 1/1</span>
<div style="left:866.5px;top:742.5px;width:3.8px;height:1.2px;background:#eee;"></div>
<div style="left:873.3px;top:742.6px;width:74.7px;height:1px;background:#9a9a9a;"></div>
<div style="left:910.5px;top:740.5px;width:1px;height:5px;background:#9a9a9a;"></div>
<div style="left:914.2px;top:738.2px;width:3.4px;height:9.8px;background:#f2f2f2;border-radius:1px;"></div>
<div style="left:952.8px;top:742.6px;width:5.5px;height:1.1px;background:#eee;"></div>
<div style="left:955px;top:740.3px;width:1.1px;height:5.5px;background:#eee;"></div>
<span class="t" style="left:968px;top:735px;color:#e8e8e8;font-size:11px;line-height:15px;font-weight:400;font-feature-settings:'palt';transform:translate(0.41px,0.88px) scaleX(0.7852);">140%</span>
<svg style="left:1000px;top:738.5px;" width="12" height="10" viewBox="0 0 12 10"><rect x="0.600" y="0.600" width="10.300" height="8.300" rx="1.500" fill="none" stroke="#cfcfe0" stroke-width="1.100"/><path d="M2.800 4 V2.800 H4.300 M7.200 2.800 H8.700 V4 M8.700 5.500 V6.700 H7.200 M4.300 6.700 H2.800 V5.500" fill="none" stroke="#e8e8e8" stroke-width="0.900"/></svg>
</body></html>
